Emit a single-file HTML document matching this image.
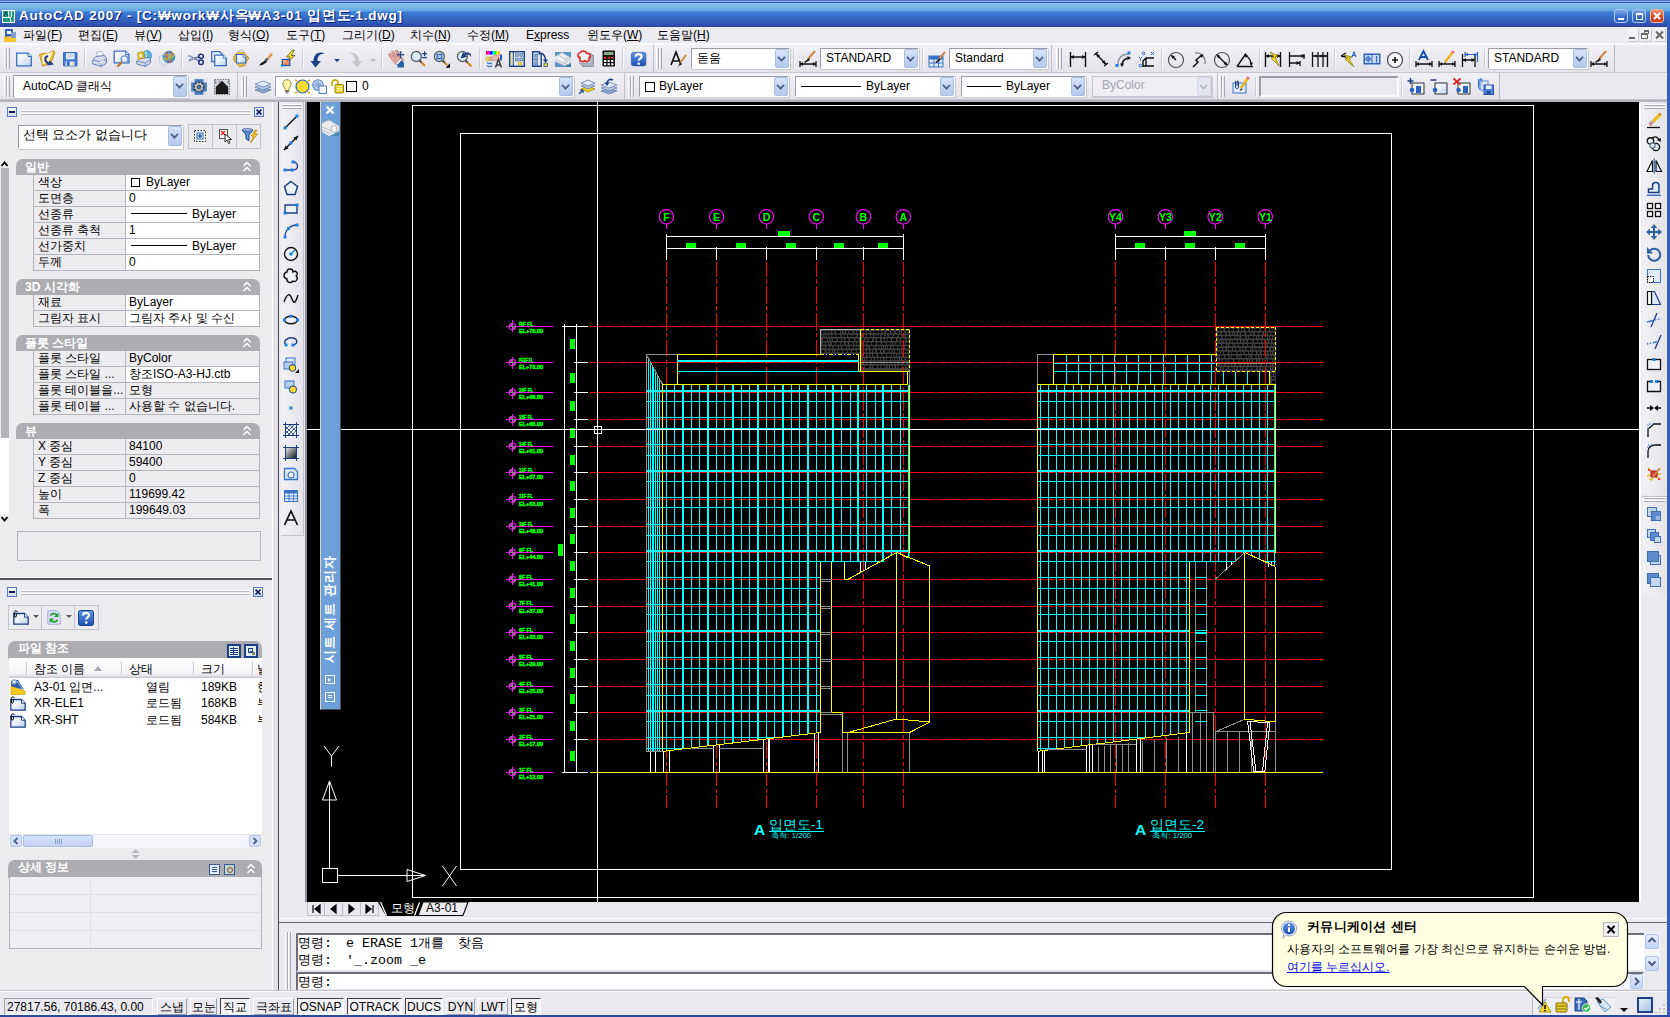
<!DOCTYPE html>
<html lang="ko"><head><meta charset="utf-8"><title>AutoCAD 2007 - [C:\work\사옥\A3-01 입면도-1.dwg]</title>
<style>
html,body{margin:0;padding:0}
body{width:1670px;height:1017px;overflow:hidden;position:relative;background:#eae9ef;font-family:"Liberation Sans",sans-serif;font-size:12px;color:#000}
.a{position:absolute;white-space:nowrap;overflow:hidden}
.t{position:absolute;white-space:nowrap;line-height:14px;height:14px;overflow:hidden}
.ic{position:absolute;overflow:visible}
#titlebar{left:0;top:0;width:1670px;height:27px;background:linear-gradient(#4f6fc4 0,#4f6fc4 1px,#8fb8e8 1px,#8fb8e8 2px,#2f57b5 2px,#2f57b5 3px,#8ac6f0 3px,#7ab8ea 7px,#62a3e2 11px,#3c7ed3 12px,#3870c9 16px,#3563bf 20px,#3055b2 24px,#2b49a3 26px,#2947a0 27px)}
#title{left:19px;top:7px;width:430px;height:18px;line-height:18px;color:#fff;font-weight:bold;font-size:13.500px;letter-spacing:.8px;text-shadow:1px 1px 0 #0a1f7a}
.wb{position:absolute;top:9px;width:14px;height:14px;border-radius:3px;border:1px solid #a9c6ee;box-sizing:border-box;background:linear-gradient(#7fa8e4,#3f74d0 50%,#2f5fc0)}
#menubar{left:0;top:27px;width:1667px;height:16px;background:#ecebf0}
.mi{top:27.500px}
.grip{position:absolute;width:3px;border-left:1px solid #fff;border-right:1px solid #a9a8b3;box-sizing:border-box;background:#e6e5ec}
.sep{position:absolute;width:1px;background:#cfced7;border-right:1px solid #f8f8fb}
.tbrow{position:absolute;background:linear-gradient(#f1f0f5,#ebeaf0 50%,#e3e2e9)}
.cb{position:absolute;height:21px;box-sizing:border-box;border:1px solid;border-color:#9c9ba6 #fdfdfe #fdfdfe #9c9ba6;background:#fff;box-shadow:1px 1px 0 #c8c7d1}
.cb .tx{position:absolute;left:5px;top:2px;line-height:15px;height:15px;white-space:nowrap;overflow:hidden}
.cb .dd{position:absolute;right:0;top:0;bottom:0;width:14px;border-radius:2px;background:linear-gradient(#d8e4f8,#c4d5f2 50%,#b5c9ec);border:1px solid #a9bee4;box-sizing:border-box}
.cb .dd:after{content:"";position:absolute;left:2px;top:4px;width:5px;height:5px;border-right:2px solid #4d6185;border-bottom:2px solid #4d6185;transform:rotate(45deg) scale(.85);transform-origin:50% 50%}
.cb.dis{background:#efeef3;border-color:#c9c8d2}
.cb.dis .tx{color:#a7a6b0}
.cb.dis .dd{background:#e3e6f0;border-color:#d3d6e2}
.cb.dis .dd:after{border-color:#b9bccb}
/* palettes */
.phead{position:absolute;left:16px;width:244px;height:16px;background:#adadb1;border-radius:7px 7px 0 0;color:#fff;font-weight:bold;line-height:16px}
.phead .tx{position:absolute;left:9px;top:0;white-space:nowrap}
.prow{position:absolute;left:33px;width:227px;height:16px;box-sizing:border-box;border:1px solid #b5b4bd;border-top:none;background:#ecebee}
.prow .k{position:absolute;left:4px;top:0;line-height:15px;white-space:nowrap;width:86px;overflow:hidden}
.prow .v{position:absolute;left:91px;top:0;right:0;bottom:0;border-left:1px solid #b5b4bd;line-height:15px;padding-left:3px;white-space:nowrap;overflow:hidden}
.prow .v.w{background:#fff}
.chev{position:absolute;right:8px;top:2px;width:10px;height:11px}
.sb{position:absolute;height:17px;line-height:17px;box-sizing:border-box;text-align:center;white-space:nowrap;overflow:hidden;top:998px}
.sb.on{border:1px solid;border-color:#3e3d48 #fff #fff #3e3d48;background:#f3f3f6}
.sb.off{border:1px solid;border-color:#fff #9d9ca8 #9d9ca8 #fff}
.cm{font-family:"Liberation Mono",monospace;font-size:13.330px;height:18px;line-height:18px}

.h{display:inline-block;white-space:nowrap;overflow:visible;vertical-align:baseline}

</style></head>
<body>
<svg width="0" height="0" style="position:absolute"><defs>
<linearGradient id="gPaper" x1="0" y1="0" x2="1" y2="1"><stop offset="0" stop-color="#ffffff"/><stop offset=".5" stop-color="#e6eef8"/><stop offset="1" stop-color="#b9d0e8"/></linearGradient>
<linearGradient id="gHelp" x1="0" y1="0" x2="0" y2="1"><stop offset="0" stop-color="#5f94e6"/><stop offset="1" stop-color="#1d4fb0"/></linearGradient>
<linearGradient id="gGrad" x1="0" y1="0" x2="1" y2="1"><stop offset="0" stop-color="#e8eef8"/><stop offset="1" stop-color="#101010"/></linearGradient>
</defs></svg>
<div id="titlebar" class="a"></div>
<svg class="ic" style="left:2px;top:10px" width="13" height="13" viewBox="0 0 13 13"><rect width="13" height="13" fill="#fff"/><rect x="1" y="1" width="5" height="6" fill="#1f9a88"/><rect x="7" y="1" width="2" height="6" fill="#2bb5a0"/><rect x="10" y="1" width="2" height="6" fill="#1f9a88"/><rect x="1" y="8" width="7" height="4" fill="#1f9a88"/><rect x="9" y="7" width="3" height="5" fill="#2bb5a0"/><path d="M2 6l2-4 2 4M9 8l2 2" stroke="#0c3c36" stroke-width="1" fill="none"/></svg>
<div id="title" class="a">AutoCAD 2007 - [C:₩work₩<span class="h" style="width:28.6px">사옥</span>₩A3-01 <span class="h" style="width:42.9px">입면도</span>-1.dwg]</div>
<div class="wb" style="left:1614px"><i style="position:absolute;left:3px;top:8px;width:6px;height:2px;background:#fff"></i></div>
<div class="wb" style="left:1632px"><i style="position:absolute;left:3px;top:3px;width:5px;height:4px;border:1px solid #fff;border-top-width:2px"></i></div>
<div class="wb" style="left:1650px;background:linear-gradient(#e89a7c,#d4512c 50%,#c5401c);border-color:#f0b8a0"><svg width="12" height="12" viewBox="0 0 12 12" style="position:absolute;left:0;top:0"><path d="M3 3l6 6M9 3l-6 6" stroke="#fff" stroke-width="2"/></svg></div>
<div class="a" style="left:1667px;top:20px;width:3px;height:997px;background:#3560c0"></div>
<div class="a" style="left:0;top:1015px;width:1670px;height:2px;background:#2a4aa4"></div>
<div id="menubar" class="a"></div>
<div class="a" style="left:0;top:43px;width:1667px;height:2px;background:#fbfbfd"></div>
<svg class="ic" style="left:3px;top:28px" width="14" height="15" viewBox="0 0 14 15"><rect x="2" y="1" width="8" height="9" fill="#2f62b8"/><rect x="4" y="3" width="4" height="3" fill="#fff"/><path d="M1 9l8-1 4 2v4h-12z" fill="#f4c430"/><rect x="8" y="4" width="5" height="6" fill="#7f9fd4"/></svg>
<div class="t mi" style="left:23px;width:44px"><span class="h" style="width:24px">파일</span>(<u>F</u>)</div>
<div class="t mi" style="left:78px;width:44px"><span class="h" style="width:24px">편집</span>(<u>E</u>)</div>
<div class="t mi" style="left:134px;width:32px"><span class="h" style="width:12px">뷰</span>(<u>V</u>)</div>
<div class="t mi" style="left:178px;width:39px"><span class="h" style="width:24px">삽입</span>(<u>I</u>)</div>
<div class="t mi" style="left:228px;width:46px"><span class="h" style="width:24px">형식</span>(<u>O</u>)</div>
<div class="t mi" style="left:286px;width:44px"><span class="h" style="width:24px">도구</span>(<u>T</u>)</div>
<div class="t mi" style="left:342px;width:56px"><span class="h" style="width:36px">그리기</span>(<u>D</u>)</div>
<div class="t mi" style="left:410px;width:45px"><span class="h" style="width:24px">치수</span>(<u>N</u>)</div>
<div class="t mi" style="left:467px;width:47px"><span class="h" style="width:24px">수정</span>(<u>M</u>)</div>
<div class="t mi" style="left:526px;width:50px">E<u>x</u>press</div>
<div class="t mi" style="left:587px;width:58px"><span class="h" style="width:36px">윈도우</span>(<u>W</u>)</div>
<div class="t mi" style="left:657px;width:56px"><span class="h" style="width:36px">도움말</span>(<u>H</u>)</div>
<div class="a" style="left:1627px;top:28px;width:11px;height:13px;background:#f2f1f5;box-shadow:1px 1px 0 #c9c8d0"><i style="position:absolute;left:2px;top:9px;width:6px;height:2px;background:#6a6a62"></i></div>
<div class="a" style="left:1640px;top:28px;width:11px;height:13px;background:#f2f1f5;box-shadow:1px 1px 0 #c9c8d0"><i style="position:absolute;left:4px;top:2px;width:5px;height:4px;border:1px solid #6a6a62;border-top-width:2px;box-sizing:border-box"></i><i style="position:absolute;left:1px;top:5px;width:7px;height:6px;border:1px solid #6a6a62;border-top-width:2px;box-sizing:border-box;background:#f2f1f5"></i></div>
<div class="a" style="left:1654px;top:28px;width:11px;height:13px;background:#f2f1f5;box-shadow:1px 1px 0 #c9c8d0"><svg width="11" height="13" style="position:absolute;left:0;top:0"><path d="M2 3.500l7 7M9 3.500l-7 7" stroke="#6a6a62" stroke-width="2"/></svg></div>
<div class="tbrow" style="left:0;top:45px;width:1615px;height:27px"></div>
<div class="a" style="left:0;top:72px;width:1667px;height:1px;background:#c9c8d2"></div>
<div class="grip" style="left:4px;top:48px;height:21px"></div><div class="grip" style="left:7px;top:48px;height:21px"></div>
<svg class="ic" style="left:16px;top:52px" width="16" height="16" viewBox="0 0 16 16"><path d="M.7 1.200h11.300l3.300 3.300v9.300h-14.600z" fill="url(#gPaper)" stroke="#3a6cc4" stroke-width="1.300"/><path d="M12 1.200v3.300h3.300" fill="#fff" stroke="#3a6cc4" stroke-width="1"/></svg>
<svg class="ic" style="left:39px;top:50px" width="17" height="17" viewBox="0 0 17 17"><path d="M.5 4.500l5.500-1.500 2 1 6.500-3.500 1.500 2-4 11-8.500 2.500z" fill="#e6b53a" stroke="#b98a1e" stroke-width=".8"/><path d="M3 5.500l11-4-4 10.500-6.500 2.500z" fill="#f8e59e"/><path d="M3 5.500l10-3-3.500 9-5.500 2z" fill="#fdf6d8" opacity=".7"/><path d="M9 6c-3.500 1-4 5 .5 7.500" fill="none" stroke="#1d3f85" stroke-width="2"/><path d="M8 15.500l7-1-4.500-4z" fill="#1d3f85"/></svg>
<svg class="ic" style="left:63px;top:52px" width="15" height="15" viewBox="0 0 15 15"><path d="M.6.600h13.300v13.300h-13.300z" fill="#4478d8" stroke="#2f5fc0" stroke-width="1"/><rect x="3" y="1.200" width="8.500" height="6" fill="#eef3fb"/><path d="M4.500 3h5.500M4.500 5h5.500" stroke="#9db4dc" stroke-width=".9"/><rect x="2.500" y="9.500" width="9" height="4.400" fill="#dfe7f5"/><rect x="4" y="9.500" width="2.500" height="4.400" fill="#2f5fc0"/><rect x="9" y="10" width="2" height="3" fill="#e8dc98"/></svg>
<svg class="ic" style="left:92px;top:51px" width="15" height="16" viewBox="0 0 15 16"><path d="M4.500 1.200l5-1 3 5-6.500 2z" fill="#fbfbfe" stroke="#8b9cc8" stroke-width=".8"/><path d="M.8 9l3-3.500 8.500-1 2.200 3v4.500l-5 3.500-8.700-2.500z" fill="#d5dcf0" stroke="#5c74b4" stroke-width=".9"/><path d="M.8 9l8.500 2 5.200-3.500M9.300 11v4" fill="none" stroke="#5c74b4" stroke-width=".8"/><path d="M6 11.500l5.500-2.500 2 1-5 3z" fill="#fff" stroke="#8b9cc8" stroke-width=".6"/></svg>
<svg class="ic" style="left:113px;top:50px" width="17" height="17" viewBox="0 0 17 17"><path d="M1.200 1.200h11.500l3.300 3.300v8.300h-14.800z" fill="url(#gPaper)" stroke="#3a6cc4" stroke-width="1.300"/><path d="M12.700 1.200v3.300h3.300" fill="#fff" stroke="#3a6cc4"/><path d="M9.500 11.500l-5 5" stroke="#b8722e" stroke-width="2.200"/><circle cx="11.600" cy="9.300" r="3.400" fill="#d8e8f8" stroke="#6f8fc8" stroke-width="1.300"/><circle cx="10.800" cy="8.500" r="1.200" fill="#fff" opacity=".8"/></svg>
<svg class="ic" style="left:136px;top:50px" width="16" height="17" viewBox="0 0 16 17"><ellipse cx="11" cy="5.500" rx="4.500" ry="5" fill="#58b0e0" stroke="#2c7ab8" stroke-width=".6"/><path d="M9 1.500c2 2 2 6 0 8" stroke="#bfe6a0" stroke-width="1.500" fill="none"/><path d="M.8 11l3-2.500 8.500-1 2.200 2v3.500l-5 3.500-8.700-2.500z" fill="#d5dcf0" stroke="#5c74b4" stroke-width=".9"/><path d="M.8 11l8.500 2 5.200-3M9.300 13v3.500" fill="none" stroke="#5c74b4" stroke-width=".8"/><path d="M1.500 3l5.500-1.500 1.500 6-6 2z" fill="#f0c020" stroke="#b08a10" stroke-width=".7"/><path d="M3.500 4.500l2.500 2.500M6 4l-2 3.500" stroke="#fff" stroke-width="1.100"/></svg>
<svg class="ic" style="left:159px;top:50px" width="16" height="17" viewBox="0 0 16 17"><path d="M.5 6l5.500-1.500 0 7 5 0-5.500 4.500-5-3.500z" fill="#dde5f2" stroke="#b5c0d8" stroke-width=".6"/><circle cx="10" cy="7" r="5.800" fill="#3f9ad8" stroke="#2a6eb0" stroke-width=".7"/><path d="M5 4.500c3.500 1 7.500 0 9.500-1.500M4.500 9c4-1 8-3 11-4" fill="none" stroke="#e8c030" stroke-width="1.200"/><path d="M8.500 1.500c-1.500 4-1 8 1.500 11M12 1.800c1.500 3 1.500 7-1 10.500" fill="none" stroke="#e04838" stroke-width="1.200"/><path d="M5.500 10c3 0 7-2 9.500-4" fill="none" stroke="#8ed050" stroke-width="1.100"/></svg>
<svg class="ic" style="left:188px;top:51px" width="16" height="16" viewBox="0 0 16 16"><path d="M.5 4.500l11 5.500M.8 9.500l10-3.800" stroke="#6f7fa8" stroke-width="1.500"/><path d="M.5 4.500l6 3.500" stroke="#c8d0e0" stroke-width=".7"/><ellipse cx="13" cy="5.300" rx="2.300" ry="2" fill="none" stroke="#1d2f75" stroke-width="1.500"/><ellipse cx="13" cy="11.200" rx="2.300" ry="2.300" fill="none" stroke="#1d2f75" stroke-width="1.500"/></svg>
<svg class="ic" style="left:211px;top:51px" width="16" height="16" viewBox="0 0 16 16"><path d="M.7.700h8l2.800 2.800v7h-10.800z" fill="url(#gPaper)" stroke="#3a6cc4" stroke-width="1.300"/><path d="M3.700 4.200h8.500l3.100 3.100v7.300h-11.600z" fill="url(#gPaper)" stroke="#3a6cc4" stroke-width="1.300"/><path d="M12.200 4.200v3.100h3.100" fill="#fff" stroke="#3a6cc4" stroke-width=".9"/></svg>
<svg class="ic" style="left:233px;top:50px" width="17" height="17" viewBox="0 0 17 17"><path d="M.8 6l5.500-5 3.500 0 6 7-4.500 8-5 .5-5.500-6z" fill="#e6bd50" stroke="#b08a20" stroke-width=".8"/><path d="M5 2l2-2 2.500 0 1.500 2z" fill="#f6f6fa" stroke="#a0a4b0" stroke-width=".6"/><path d="M3.500 4.500h6.500l2.800 2.800v5.700h-9.300z" fill="url(#gPaper)" stroke="#3a6cc4" stroke-width="1.200"/><path d="M10 4.500v2.800h2.800" fill="#fff" stroke="#3a6cc4" stroke-width=".8"/></svg>
<svg class="ic" style="left:257px;top:51px" width="17" height="16" viewBox="0 0 17 16"><path d="M15 2.500l-5.500 7" stroke="#d8955a" stroke-width="2.600"/><path d="M14.200 1.800l-5 6.500" stroke="#f0c8a0" stroke-width=".8"/><path d="M10.500 7.500l-2.500 3" stroke="#4a6a78" stroke-width="2.400"/><path d="M8.500 9.500l1.500 1.500-4.500 3-3.500.5 2-2.500z" fill="#1a1a1a"/></svg>
<svg class="ic" style="left:280px;top:50px" width="17" height="17" viewBox="0 0 17 17"><path d="M12.500 0l-6 7h3.500l-4 6 9-7.500h-3.800l3.300-5.500z" fill="#f6e020" stroke="#4a4020" stroke-width=".7"/><rect x="2.300" y="9.500" width="7.500" height="6" fill="#f08858" stroke="#1d4fb0" stroke-width="1.200"/><rect x="3" y="10.200" width="3" height="2" fill="#f8b898"/><rect x="1" y="14" width="2.600" height="2.600" fill="#1f7fe6"/></svg>
<div class="sep" style="left:84px;top:49px;height:20px"></div>
<div class="sep" style="left:181px;top:49px;height:20px"></div>
<div class="sep" style="left:302px;top:49px;height:20px"></div>
<div class="sep" style="left:381px;top:49px;height:20px"></div>
<div class="sep" style="left:479px;top:49px;height:20px"></div>
<div class="sep" style="left:622px;top:49px;height:20px"></div>
<svg class="ic" style="left:310px;top:51px" width="17" height="17" viewBox="0 0 17 17"><path d="M15.800 3.200c-5.500-4-12.500-1-12.300 6.800h-3l5 6.500 5.500-6.500h-3.500c-.3-5 3.500-8.500 8.300-6.800z" fill="#1d3f85"/></svg>
<div class="a" style="left:334px;top:59px;width:0;height:0;border:3px solid transparent;border-top:3px solid #1d3f85;border-bottom:none"></div>
<svg class="ic" style="left:346px;top:51px" width="17" height="17" viewBox="0 0 17 17"><path d="M.8 3.200c5.500-4 12.500-1 12.300 6.800h3l-5 6.500-5.500-6.500h3.500c.3-5-3.500-8.500-8.300-6.800z" fill="#c6c8ce"/><path d="M1.500 3c5-3 10.500-1 11 4" fill="none" stroke="#eceef2" stroke-width=".8"/></svg>
<div class="a" style="left:370px;top:59px;width:0;height:0;border:3px solid transparent;border-top:3px solid #b9bac4;border-bottom:none"></div>
<svg class="ic" style="left:388px;top:51px" width="17" height="17" viewBox="0 0 17 17"><path d="M.5 3.500l1.500-1.500 4.500 4-3-5.500 1.800-.5 4 5.500-1.800-6 2-.2 3 6.500 3.500 3-5 5.500-4-1.500-3.500-4.500z" fill="#dba79c" stroke="#b07868" stroke-width=".7"/><path d="M9.500 13.500l4-4.500 2.500 2.500v5h-6.500z" fill="#2f5f9f"/><path d="M8.500 12.500l4-4.500 1 1-4 4.500z" fill="#f4f6fa"/><path d="M12.600 0l1.500 1.800h-1v1.500h1.500v-1l1.800 1.500-1.800 1.500v-1h-1.500v1.500h1l-1.500 1.800-1.500-1.800h1v-1.500h-1.500v1l-1.800-1.500 1.800-1.500v1h1.500v-1.500h-1z" fill="#1d3f85"/></svg>
<svg class="ic" style="left:410px;top:50.5px" width="18" height="17" viewBox="0 0 18 17"><path d="M9.500 9.500l5.500 5.500" stroke="#d0882e" stroke-width="2.300"/><path d="M9.500 9.500l2 2" stroke="#5a5f68" stroke-width="2.300"/><circle cx="6.300" cy="5.500" r="5" fill="#dce9f8" stroke="#5a5f68" stroke-width="1.300"/><path d="M3.300 3.500a3.200 3.200 0 0 1 3-1.500" fill="none" stroke="#fff" stroke-width="1.200"/><path d="M14.600 0.200v5M12.100 2.700h5M12.100 6.700h5" stroke="#1d3f85" stroke-width="1.300"/></svg>
<svg class="ic" style="left:433px;top:50.5px" width="18" height="17" viewBox="0 0 18 17"><path d="M9.500 9.500l4.500 4.500" stroke="#d0882e" stroke-width="2.300"/><path d="M9.500 9.500l2 2" stroke="#5a5f68" stroke-width="2.300"/><circle cx="6.400" cy="5.500" r="5" fill="#dce9f8" stroke="#5a5f68" stroke-width="1.300"/><path d="M3.400 3.500a3.200 3.200 0 0 1 3-1.500" fill="none" stroke="#fff" stroke-width="1.200"/><rect x="4" y="3.200" width="4.800" height="4.600" fill="#a8c0e0" stroke="#2f5f9f" stroke-width="1.200"/><path d="M17 12.300v4.500h-4.500z" fill="#000"/></svg>
<svg class="ic" style="left:456px;top:50.5px" width="18" height="17" viewBox="0 0 18 17"><path d="M9.500 9.500l6 6" stroke="#d0882e" stroke-width="2.300"/><path d="M9.500 9.500l2 2" stroke="#5a5f68" stroke-width="2.300"/><circle cx="6.400" cy="5.500" r="5" fill="#dce9f8" stroke="#5a5f68" stroke-width="1.300"/><path d="M3.400 3.500a3.200 3.200 0 0 1 3-1.500" fill="none" stroke="#fff" stroke-width="1.200"/><path d="M15 6c1-4-3-5.500-6.500-3.500l-1.500-1.500-2.500 6.500 6.500-1.800-1.500-1.500c2.500-1.200 4.500-.5 5.500 1.800z" fill="#1d3f85"/></svg>
<svg class="ic" style="left:486px;top:51px" width="17" height="17" viewBox="0 0 17 17"><defs><linearGradient id="gRb" x1="0" x2="1"><stop offset="0" stop-color="#f00"/><stop offset=".2" stop-color="#f0f"/><stop offset=".4" stop-color="#00f"/><stop offset=".55" stop-color="#0ff"/><stop offset=".7" stop-color="#0f0"/><stop offset=".85" stop-color="#ff0"/><stop offset="1" stop-color="#f80"/></linearGradient></defs><rect x="0" y="0" width="13.500" height="3.600" fill="url(#gRb)"/><rect x="0" y="6" width="6.500" height="3.600" fill="#e8dc60" stroke="#b8a830" stroke-width=".6"/><path d="M2.500 8l6-4 6 0 0 4.500-5 1.500z" fill="#e8b8a8" stroke="#b88070" stroke-width=".6"/><rect x="14" y="3.500" width="2" height="6" fill="#2f5fc0"/><path d="M1 11.500c2 1.500 3.500 1.500 5 0M1 14.500c2 1.500 3.500 1.500 5 0" fill="none" stroke="#3a78c8" stroke-width="1.300"/><path d="M9.500 16.500l3-8 3 8M10.600 14h3.800" fill="none" stroke="#3a3e48" stroke-width="1.500"/></svg>
<svg class="ic" style="left:509px;top:51px" width="16" height="16" viewBox="0 0 16 16"><rect x=".7" y=".7" width="14.600" height="14.600" fill="#e4ecf8" stroke="#1d3f85" stroke-width="1.400"/><path d="M4.300 .7v14.600" stroke="#1d3f85" stroke-width="1"/><g fill="#e8d020"><rect x="1.800" y="2.500" width="1.500" height="1.500"/><rect x="1.800" y="5.500" width="1.500" height="1.500"/><rect x="1.800" y="8.500" width="1.500" height="1.500"/><rect x="1.800" y="11.500" width="1.500" height="1.500"/></g><g fill="#7f9fd0" stroke="#4f6fa8" stroke-width=".5"><rect x="6.300" y="2.500" width="3" height="3"/><rect x="10.800" y="2.500" width="3" height="3"/><rect x="6.300" y="7" width="3" height="3"/><rect x="10.800" y="7" width="3" height="3"/></g><g fill="#f0e860"><rect x="7.300" y="3.500" width="1" height="1"/><rect x="11.800" y="3.500" width="1" height="1"/><rect x="7.300" y="8" width="1" height="1"/><rect x="11.800" y="8" width="1" height="1"/></g><rect x="9.500" y="11" width="3" height="3" fill="#f0e040" stroke="#a89820" stroke-width=".5"/></svg>
<svg class="ic" style="left:532px;top:51px" width="17" height="16" viewBox="0 0 17 16"><path d="M.7 .7h6.500l2 2v12.600h-8.500z" fill="#e4ecf8" stroke="#1d3f85" stroke-width="1.400"/><g fill="#7f9fd0" stroke="#4f6fa8" stroke-width=".5"><rect x="2.800" y="3" width="3" height="3"/><rect x="2.800" y="7" width="3" height="3"/><rect x="2.800" y="11" width="3" height="3"/></g><path d="M6.500 3c4-1.500 7 1 7 6" fill="none" stroke="#1d3f85" stroke-width="1.600"/><path d="M10.800 8.500h5.400l-2.700 3.200z" fill="#1d3f85"/><rect x="12" y="12" width="3.500" height="3.500" fill="#f0e040" stroke="#1d3f85" stroke-width=".7"/></svg>
<svg class="ic" style="left:555px;top:52px" width="16" height="15" viewBox="0 0 16 15"><rect x="0" y="0" width="16" height="15" fill="#5595c8"/><path d="M0 4.500l7-4 9 5.500v5l-5 3.500-11-5z" fill="#eceef2"/><path d="M0 4.500l7-4 9 5.500M0 7.500l10 4.500M0 9.500l11 5M3 3l9 5" fill="none" stroke="#b0b5c0" stroke-width=".8"/><ellipse cx="12.500" cy="9.500" rx="2.600" ry="3.200" fill="#f8f8fa" stroke="#a0a5b2" stroke-width=".8"/><ellipse cx="12.500" cy="9.500" rx="1" ry="1.400" fill="#c0c4ce"/><path d="M8 15l8-4v4z" fill="#3f7fa8"/></svg>
<svg class="ic" style="left:577px;top:50px" width="17" height="17" viewBox="0 0 17 17"><path d="M5.500 5.500h11v11h-11z" fill="#c8ccd6" stroke="#7a808e" stroke-width=".8"/><path d="M4 4h11v11h-11z" fill="#dde0e8" stroke="#7a808e" stroke-width=".8"/><path d="M2.500 3.500h11v10h-11z" fill="#c8daf0" stroke="#8a90a0" stroke-width=".7"/><path d="M3.500 2.500c-3 .5-3.500 4.500-.5 5-1.500 3 2.500 5.500 4.500 3.200 2 2 5.500.5 4.500-2.700 2.500-1.500 1-5.500-2-4.500-.8-3-5.500-3-6.500-1z" fill="#eef4fc" stroke="#e82828" stroke-width="1.700"/></svg>
<svg class="ic" style="left:602px;top:50px" width="14" height="17" viewBox="0 0 14 17"><rect x=".5" y=".5" width="12.500" height="16" rx="1" fill="#111"/><rect x="2" y="2" width="9.500" height="3" fill="#8aa88a"/><g fill="#e83030"><rect x="2" y="6.800" width="2.200" height="2"/><rect x="5.600" y="6.800" width="2.200" height="2"/><rect x="9.200" y="6.800" width="2.200" height="2"/></g><g fill="#fff"><rect x="2" y="10" width="2.200" height="2"/><rect x="5.600" y="10" width="2.200" height="2"/><rect x="9.200" y="10" width="2.200" height="2"/><rect x="2" y="13.200" width="2.200" height="2"/><rect x="5.600" y="13.200" width="2.200" height="2"/><rect x="9.200" y="13.200" width="2.200" height="2"/></g></svg>
<svg class="ic" style="left:631px;top:52px" width="15" height="14" viewBox="0 0 15 14"><rect x=".3" y=".3" width="14.600" height="13.600" rx="2.500" fill="url(#gHelp)" stroke="#2a52a8" stroke-width=".6"/><path d="M4.600 4.800c0-3.500 6-3.500 6-.2 0 2-2.900 2.100-2.900 4.200" fill="none" stroke="#fff" stroke-width="2.200"/><circle cx="7.700" cy="11.700" r="1.300" fill="#fff"/></svg>
<div class="a" style="left:653px;top:45px;width:1px;height:27px;background:#c2c1cb"></div>
<div class="grip" style="left:656px;top:48px;height:21px"></div><div class="grip" style="left:659px;top:48px;height:21px"></div>
<svg class="ic" style="left:670px;top:51px" width="18" height="17" viewBox="0 0 18 17"><path d="M1 14l5-13 5 13M3 10h6" fill="none" stroke="#111" stroke-width="1.700"/><path d="M16 4l-6 8" stroke="#c98a4a" stroke-width="2"/><path d="M10.500 11l-3 5 4-3z" fill="#222"/></svg>
<div class="cb " style="left:691px;top:48px;width:99px;height:21px"><span class="tx">돋움</span><span class="dd"></span></div>
<div class="sep" style="left:793px;top:49px;height:20px"></div>
<svg class="ic" style="left:799px;top:50px" width="18" height="18" viewBox="0 0 18 18"><path d="M1 11v6M17 11v6M1 14h16" stroke="#111" stroke-width="1.300"/><path d="M1 14l3-2v4zM17 14l-3-2v4z" fill="#111"/><path d="M16 1l-7 8" stroke="#c98a4a" stroke-width="2.200"/><path d="M10 8l-5 4 1 1 5-3z" fill="#222"/></svg>
<div class="cb " style="left:820px;top:48px;width:99px;height:21px"><span class="tx">STANDARD</span><span class="dd"></span></div>
<div class="sep" style="left:922px;top:49px;height:20px"></div>
<svg class="ic" style="left:928px;top:51px" width="18" height="17" viewBox="0 0 18 17"><rect x="1" y="5" width="14" height="11" fill="#dfe9f7" stroke="#3b74c9"/><rect x="1" y="5" width="14" height="3.500" fill="#3b74c9"/><path d="M1 12h14M6 8v8M10.500 8v8" stroke="#3b74c9"/><path d="M17 1l-6 7" stroke="#c98a4a" stroke-width="2.200"/><path d="M11.500 7l-4 4 1 1 4-3z" fill="#222"/></svg>
<div class="cb " style="left:949px;top:48px;width:99px;height:21px"><span class="tx">Standard</span><span class="dd"></span></div>
<div class="a" style="left:1051px;top:45px;width:1px;height:27px;background:#c2c1cb"></div>
<div class="grip" style="left:1056px;top:48px;height:21px"></div><div class="grip" style="left:1059px;top:48px;height:21px"></div>
<svg class="ic" style="left:1069px;top:51px" width="18" height="17" viewBox="0 0 18 17"><path d="M1.500 1v15M16.500 1v15M1.500 6h15" stroke="#111" stroke-width="1.400" fill="none"/><path d="M1.500 6l3.500-2v4zM16.500 6l-3.500-2v4z" fill="#111"/></svg>
<svg class="ic" style="left:1092px;top:51px" width="18" height="17" viewBox="0 0 18 17"><path d="M2 4l4-3M12 15l4-3M4 2.500l10 11" stroke="#111" stroke-width="1.400" fill="none"/><path d="M4 2.500l4 2-2.500 2.200zM14 13.500l-4-2 2.500-2.200z" fill="#111"/></svg>
<svg class="ic" style="left:1115px;top:51px" width="18" height="17" viewBox="0 0 18 17"><path d="M3 14c0-7 4-11 11-11" fill="none" stroke="#8a8f9e" stroke-width="1.300"/><path d="M7 15c0-5 3-8 8-8" fill="none" stroke="#111" stroke-width="1.600"/><path d="M7 16l-2-3.500h4zM16 7l-3.500-2v4z" fill="#111"/><rect x="12.500" y="0.500" width="3" height="3" fill="#2a7fe0"/><rect x="0.500" y="13" width="3" height="3" fill="#2a7fe0"/></svg>
<svg class="ic" style="left:1138px;top:51px" width="18" height="17" viewBox="0 0 18 17"><path d="M5 16v-6l3-3 3-0M5 15h11M8 7h8M8 7v9" fill="none" stroke="#111" stroke-width="1.400"/><g fill="none" stroke="#2a63c0" stroke-width="1"><circle cx="5.500" cy="2.500" r="1.300"/><circle cx="2.500" cy="14.500" r="1.300"/><path d="M13 1l3 3m0-3l-3 3M1 6l1.500 1.500 1.500-1.500M2.500 7.500v2"/></g></svg>
<svg class="ic" style="left:1167px;top:51px" width="18" height="18" viewBox="0 0 18 18"><circle cx="9" cy="9" r="7.500" fill="none" stroke="#555" stroke-width="1.200"/><path d="M9 9l-4.500-4.500" stroke="#111" stroke-width="1.400"/><path d="M4 4l4 1.500-2.500 2.500z" fill="#111"/></svg>
<svg class="ic" style="left:1190px;top:51px" width="18" height="18" viewBox="0 0 18 18"><path d="M5 2c6-1 11 4 10 11" fill="none" stroke="#777" stroke-width="1.200"/><path d="M3 16l5-5-2-2 6-5" fill="none" stroke="#111" stroke-width="1.500"/><path d="M13.500 3l-4 1.200 2.500 2.800z" fill="#111"/></svg>
<svg class="ic" style="left:1213px;top:51px" width="18" height="18" viewBox="0 0 18 18"><circle cx="9" cy="9" r="7.500" fill="none" stroke="#555" stroke-width="1.200"/><path d="M4 4l10 10" stroke="#111" stroke-width="1.400"/><path d="M3.500 3.500l4 1.500-2.500 2.500zM14.500 14.500l-4-1.500 2.500-2.500z" fill="#111"/></svg>
<svg class="ic" style="left:1236px;top:51px" width="18" height="17" viewBox="0 0 18 17"><path d="M1 15.500h16M1 15.500l9-13" fill="none" stroke="#111" stroke-width="1.400"/><path d="M9 4c4 2 6 6 6 10" fill="none" stroke="#111" stroke-width="1.200"/><path d="M8 3.500l4 .5-2 3zM15.500 15l-2-3.500 3.500 0z" fill="#111"/></svg>
<svg class="ic" style="left:1264px;top:51px" width="18" height="17" viewBox="0 0 18 17"><path d="M1.500 1v15M16.500 1v15M1.500 5h15" stroke="#111" stroke-width="1.400" fill="none"/><path d="M1.500 5l3.500-2v4zM16.500 5l-3.500-2v4z" fill="#111"/><path d="M6 1l8 4-3 1 4 9-8-8 3-1z" fill="#f2d21c" stroke="#8a7a10" stroke-width=".8"/></svg>
<svg class="ic" style="left:1288px;top:51px" width="18" height="17" viewBox="0 0 18 17"><path d="M1.500 1v15M16 3v5M12 10v5M1.500 5h15M1.500 12h10.500" stroke="#111" stroke-width="1.300" fill="none"/><path d="M17 5l-3.500-2v4zM12 12l-3.500-2v4z" fill="#111"/></svg>
<svg class="ic" style="left:1311px;top:51px" width="18" height="17" viewBox="0 0 18 17"><path d="M1.500 1v15M7 1v15M12 1v15M16.500 1v15M1.500 5h15" stroke="#111" stroke-width="1.300" fill="none"/><path d="M7 5l-2.500-1.500v3zM12 5l-2.500-1.500v3zM12 5l2.500-1.500v3z" fill="#111"/></svg>
<svg class="ic" style="left:1340px;top:51px" width="18" height="17" viewBox="0 0 18 17"><path d="M1 5l5-3M1 5l5 1" stroke="#111" stroke-width="1.300"/><path d="M4 4l8 2-3 2 5 8-9-8 3-1z" fill="#f2d21c" stroke="#8a7a10" stroke-width=".8"/><path d="M12 6l2-5 2 5M12.700 4.500h2.600" fill="none" stroke="#2a63c0" stroke-width="1.100"/></svg>
<svg class="ic" style="left:1363px;top:51px" width="18" height="16" viewBox="0 0 18 16"><rect x="0.500" y="2.500" width="17" height="11" fill="#2a63c0"/><rect x="2" y="4" width="6.500" height="8" fill="#cfe0f3"/><rect x="9.500" y="4" width="6.500" height="8" fill="#cfe0f3"/><circle cx="5.200" cy="8" r="2.200" fill="none" stroke="#2a63c0"/><path d="M5.200 4.500v7M2.500 8h5.500" stroke="#2a63c0" stroke-width=".9"/><path d="M11 11.500h.1M13.500 5v6.500" stroke="#2a63c0" stroke-width="1.300"/></svg>
<svg class="ic" style="left:1386px;top:51px" width="18" height="18" viewBox="0 0 18 18"><circle cx="9" cy="9" r="7.500" fill="#f4f5f8" stroke="#444" stroke-width="1.200"/><path d="M9 6v6M6 9h6" stroke="#111" stroke-width="1.600"/></svg>
<svg class="ic" style="left:1415px;top:51px" width="18" height="17" viewBox="0 0 18 17"><path d="M4 9l4.500-9 4.500 9M5.500 6h6" fill="none" stroke="#1d4fa8" stroke-width="1.900"/><path d="M1 10v6M17 10v6M1 13h16" stroke="#111" stroke-width="1.300"/><path d="M1 13l3-2v4zM17 13l-3-2v4z" fill="#111"/></svg>
<svg class="ic" style="left:1438px;top:51px" width="18" height="17" viewBox="0 0 18 17"><path d="M1 10v6M17 10v6M1 13h16" stroke="#111" stroke-width="1.300"/><path d="M1 13l3-2v4zM17 13l-3-2v4z" fill="#111"/><path d="M15 1l-8 10" stroke="#e8b820" stroke-width="2.600"/><path d="M15.800 0l-1.600 2" stroke="#e07080" stroke-width="2.600"/><path d="M7 11l-1.500 2.500 2.700-1z" fill="#222"/></svg>
<svg class="ic" style="left:1461px;top:51px" width="18" height="17" viewBox="0 0 18 17"><path d="M1.500 3v13M14 3v13M1.500 9h12.500" stroke="#111" stroke-width="1.300" fill="none"/><path d="M1.500 9l3.500-2v4zM14 9l-3.500-2v4z" fill="#111"/><path d="M4 1v5M16.500 1v10M4 3.500h12.500" stroke="#2a63c0" stroke-width="1.200" fill="none"/><path d="M4 3.500l3-1.700v3.400zM16.500 3.500l-3-1.700v3.400z" fill="#2a63c0"/></svg>
<div class="sep" style="left:1161px;top:49px;height:20px"></div>
<div class="sep" style="left:1259px;top:49px;height:20px"></div>
<div class="sep" style="left:1334px;top:49px;height:20px"></div>
<div class="sep" style="left:1409px;top:49px;height:20px"></div>
<div class="sep" style="left:1484px;top:49px;height:20px"></div>
<div class="cb " style="left:1488px;top:48px;width:100px;height:21px"><span class="tx">STANDARD</span><span class="dd"></span></div>
<svg class="ic" style="left:1590px;top:50px" width="18" height="18" viewBox="0 0 18 18"><path d="M1 11v6M17 11v6M1 14h16" stroke="#111" stroke-width="1.300"/><path d="M1 14l3-2v4zM17 14l-3-2v4z" fill="#111"/><path d="M16 1l-7 8" stroke="#c98a4a" stroke-width="2.200"/><path d="M10 8l-5 4 1 1 5-3z" fill="#222"/></svg>
<div class="a" style="left:1614px;top:45px;width:1px;height:27px;background:#b9b8c3"></div>
<div class="tbrow" style="left:0;top:73px;width:1500px;height:27px"></div>
<div class="a" style="left:0;top:99px;width:1667px;height:1px;background:#c4c3cd"></div>
<div class="a" style="left:0;top:100px;width:1667px;height:2px;background:#b4b3be"></div>
<div class="grip" style="left:4px;top:76px;height:21px"></div><div class="grip" style="left:7px;top:76px;height:21px"></div>
<div class="cb " style="left:13px;top:75px;width:175px;height:23px"><span class="tx" style="left:9px;top:3px">AutoCAD <span class="h" style="width:36px">클래식</span></span><span class="dd"></span></div>
<svg class="ic" style="left:191px;top:79px" width="16" height="16" viewBox="0 0 18 18"><rect x="0" y="0" width="18" height="18" fill="#5d8fd0"/><rect x="1.500" y="1.500" width="15" height="15" fill="#3f72b8"/><circle cx="9" cy="9" r="5.200" fill="#c9ccd4" stroke="#444" stroke-width="1.800" stroke-dasharray="2.200 1.600"/><circle cx="9" cy="9" r="2.200" fill="#3f72b8" stroke="#444"/><path d="M0 0h4v4h-4zM14 0h4v4h-4zM0 14h4v4h-4zM14 14h4v4h-4z" fill="#dfe6f2"/></svg>
<svg class="ic" style="left:214px;top:79px" width="16" height="16" viewBox="0 0 18 18"><rect x="0.500" y="0.500" width="17" height="17" fill="#d5d8e0" stroke="#555" stroke-dasharray="1.500 1.500"/><path d="M2 9l7-7 7 7v8h-14z" fill="#1c1c1c"/><path d="M2 2v3M6 2v2M16 2v3" stroke="#333" stroke-width=".8"/></svg>
<div class="a" style="left:237px;top:73px;width:1px;height:27px;background:#c2c1cb"></div>
<div class="grip" style="left:241px;top:76px;height:21px"></div><div class="grip" style="left:244px;top:76px;height:21px"></div>
<svg class="ic" style="left:254px;top:79px" width="18" height="16" viewBox="0 0 18 16"><path d="M1 11l8-3 8 3-8 3z" fill="#8da5cc" stroke="#5a76a8" stroke-width=".7"/><path d="M1 8l8-3 8 3-8 3z" fill="#b6c6e0" stroke="#5a76a8" stroke-width=".7"/><path d="M1 5l8-3 8 3-8 3z" fill="#e4ebf6" stroke="#5a76a8" stroke-width=".7"/></svg>
<div class="cb" style="left:275px;top:76px;width:299px;height:21px"><span class="dd"></span><span class="tx" style="left:86px">0</span><i style="position:absolute;left:70px;top:4px;width:9px;height:9px;border:1px solid #000;background:#fff"></i></div>
<svg class="ic" style="left:282px;top:79px" width="10" height="15" viewBox="0 0 10 15"><path d="M5 0.700c-5 0-5 6-2 8.500v2.300h4v-2.300c3-2.500 3-8.500-2-8.500z" fill="#fdf3a8" stroke="#8a7a40" stroke-width=".9"/><path d="M3.200 12.500h3.600M3.700 14h2.600" stroke="#556" stroke-width="1.100"/></svg>
<svg class="ic" style="left:295px;top:79px" width="15" height="15" viewBox="0 0 15 15"><rect x="0" y="0" width="15" height="15" fill="#3f72b8" opacity=".0"/><circle cx="7.500" cy="7.500" r="6.500" fill="#f7dc2e" stroke="#2d62b4" stroke-width="1.200"/><path d="M0 1l2 1M15 1l-2 1M0 14l2-1M15 14l-2-1" stroke="#e0b010" stroke-width="1.600"/></svg>
<svg class="ic" style="left:312px;top:79px" width="15" height="15" viewBox="0 0 15 15"><circle cx="6" cy="6" r="5.300" fill="#c7d6ee" stroke="#5a80c0" stroke-width="1.100"/><circle cx="6" cy="6" r="2.300" fill="none" stroke="#7fa0d4"/><path d="M6 .5v11M.5 6h11M2 2l8 8M10 2l-8 8" stroke="#7fa0d4" stroke-width=".7"/><rect x="7" y="7" width="7.500" height="7.500" fill="#f4f6fa" stroke="#5a80c0"/></svg>
<svg class="ic" style="left:330px;top:79px" width="14" height="15" viewBox="0 0 14 15"><path d="M2 7v-3c0-4 6-4 6 0v1" fill="none" stroke="#c9a800" stroke-width="1.600"/><rect x="5" y="5.500" width="8.500" height="8.500" rx="1" fill="#ecd02c" stroke="#9a8200"/><path d="M7 7.500h5M7 9.500h5M7 11.500h5" stroke="#fff7b0" stroke-width=".9"/></svg>
<svg class="ic" style="left:578px;top:78px" width="18" height="17" viewBox="0 0 18 17"><path d="M3 11l7-3 7 3-7 3z" fill="#f2d21c" stroke="#9a8200" stroke-width=".7"/><path d="M3 8l7-3 7 3-7 3z" fill="#b6c6e0" stroke="#5a76a8" stroke-width=".7"/><path d="M3 5l7-3 7 3-7 3z" fill="#e4ebf6" stroke="#5a76a8" stroke-width=".7"/><path d="M1 16l4-4M5 12h-3M5 12v3" stroke="#1d3f85" stroke-width="1.200" fill="none"/></svg>
<svg class="ic" style="left:600px;top:79px" width="18" height="16" viewBox="0 0 18 16"><path d="M1 12l8-3 8 3-8 3z" fill="#8da5cc" stroke="#5a76a8" stroke-width=".7"/><path d="M1 9l8-3 8 3-8 3z" fill="#b6c6e0" stroke="#5a76a8" stroke-width=".7"/><path d="M1 6l8-3 8 3-8 3z" fill="#e4ebf6" stroke="#5a76a8" stroke-width=".7"/><path d="M13 1c-3-1.500-6 0-6 3.500" fill="none" stroke="#1d3f85" stroke-width="1.600"/><path d="M4.500 3.500h5l-2.500 3.500z" fill="#1d3f85"/></svg>
<div class="a" style="left:624px;top:73px;width:1px;height:27px;background:#c2c1cb"></div>
<div class="grip" style="left:628px;top:76px;height:21px"></div><div class="grip" style="left:631px;top:76px;height:21px"></div>
<div class="cb" style="left:639px;top:76px;width:150px;height:21px"><span class="dd"></span><i style="position:absolute;left:5px;top:5px;width:8px;height:8px;border:1px solid #000;background:#fff"></i><span class="tx" style="left:19px">ByLayer</span></div>
<div class="cb" style="left:795px;top:76px;width:160px;height:21px"><span class="dd"></span><i style="position:absolute;left:5px;top:9px;width:60px;height:1px;background:#000"></i><span class="tx" style="left:70px">ByLayer</span></div>
<div class="cb" style="left:961px;top:76px;width:125px;height:21px"><span class="dd"></span><i style="position:absolute;left:5px;top:9px;width:34px;height:1px;background:#000"></i><span class="tx" style="left:44px">ByLayer</span></div>
<div class="cb dis" style="left:1092px;top:76px;width:120px;height:21px"><span class="tx" style="left:9px;top:1px">ByColor</span><span class="dd"></span></div>
<div class="a" style="left:1217px;top:73px;width:1px;height:27px;background:#c2c1cb"></div>
<div class="grip" style="left:1219px;top:76px;height:21px"></div><div class="grip" style="left:1222px;top:76px;height:21px"></div>
<svg class="ic" style="left:1232px;top:77px" width="18" height="17" viewBox="0 0 18 17"><rect x="1" y="6" width="13" height="10" fill="#dfe9f7" stroke="#3b74c9"/><path d="M3.500 4v6c0 2 3 2 3 0v-5c0-1.500-1.500-1.500-1.500 0v4" fill="none" stroke="#1d3f85" stroke-width="1"/><path d="M16 1l-7 10" stroke="#e8b820" stroke-width="2.600"/><path d="M16.700 0l-1.400 2" stroke="#e07080" stroke-width="2.600"/><path d="M9 11l-1 3 2.500-1.500z" fill="#222"/></svg>
<div class="sep" style="left:1255px;top:77px;height:20px"></div>
<div class="a" style="left:1259px;top:76px;width:140px;height:21px;box-sizing:border-box;border:2px solid;border-color:#9c9ba6 #fafafc #fafafc #9c9ba6;background:#eae9ef"></div>
<div class="sep" style="left:1401px;top:77px;height:20px"></div>
<svg class="ic" style="left:1407px;top:78px" width="18" height="17" viewBox="0 0 18 17"><rect x="5" y="5" width="12" height="11" fill="#eef3fa" stroke="#333"/><rect x="9" y="8" width="5" height="7" fill="#2a63c0"/><circle cx="5" cy="12" r="2.300" fill="#2a63c0"/><path d="M3.500 0v6M.5 3h6" stroke="#1d3f85" stroke-width="1.500"/></svg>
<svg class="ic" style="left:1430px;top:78px" width="18" height="17" viewBox="0 0 18 17"><rect x="5" y="5" width="12" height="11" fill="url(#gPaper)" stroke="#333"/><circle cx="5" cy="12" r="2.300" fill="#2a63c0"/><path d="M.5 2h6" stroke="#1d3f85" stroke-width="1.500"/></svg>
<svg class="ic" style="left:1453px;top:78px" width="18" height="17" viewBox="0 0 18 17"><rect x="5" y="5" width="12" height="11" fill="#eef3fa" stroke="#333"/><rect x="10" y="8" width="5" height="7" fill="#2a63c0"/><circle cx="5.500" cy="12" r="2.300" fill="#2a63c0"/><path d="M.5 .5l7 6M7.500 .5l-7 6" stroke="#e02020" stroke-width="1.800"/></svg>
<svg class="ic" style="left:1476px;top:78px" width="18" height="17" viewBox="0 0 18 17"><path d="M2.500 1v8c0 2 3.500 2 3.500 0v-7c0-1.500-2-1.500-2 0v6" fill="none" stroke="#3b74c9" stroke-width="1.100"/><rect x="4" y="3" width="8" height="9" fill="#dfe9f7" stroke="#3b74c9" opacity=".8"/><rect x="8" y="7" width="9.500" height="9.500" fill="#4f7fd6" stroke="#2d56a8"/><rect x="10" y="7.500" width="5.500" height="3.500" fill="#e8eef8"/><rect x="10.500" y="13" width="4" height="3.500" fill="#2a4c96"/></svg>
<div class="a" style="left:1499px;top:73px;width:1px;height:27px;background:#b9b8c3"></div>
<div class="a" style="left:0;top:102px;width:278px;height:890px;background:#ecebee"></div>
<div class="a" style="left:278px;top:102px;width:2px;height:890px;background:#4a4a52"></div>
<div class="a" style="left:272px;top:102px;width:1px;height:890px;background:#fff"></div>
<div class="a" style="left:273px;top:102px;width:5px;height:890px;background:#e2e1e8"></div>
<div class="a" style="left:7px;top:107px;width:10px;height:10px;box-sizing:border-box;border:1px solid #5a7ab8;background:linear-gradient(#fff,#c8d6f0)"><i style="position:absolute;left:1px;top:3px;width:6px;height:2px;background:#0a1a5a"></i></div>
<div class="a" style="left:21px;top:110px;width:229px;height:2px;border-top:1px solid #fdfdff;border-bottom:1px solid #b5b4bf;box-sizing:border-box"></div>
<div class="a" style="left:21px;top:113px;width:229px;height:2px;border-top:1px solid #fdfdff;border-bottom:1px solid #b5b4bf;box-sizing:border-box"></div>
<div class="a" style="left:254px;top:107px;width:10px;height:10px;box-sizing:border-box;border:1px solid #5a7ab8;background:linear-gradient(#fff,#c8d6f0)"><svg width="8" height="8" style="position:absolute;left:0;top:0"><path d="M1.500 1.500l5 5M6.500 1.500l-5 5" stroke="#0a1a5a" stroke-width="1.700"/></svg></div>
<div class="cb " style="left:18px;top:125px;width:165px;height:24px"><span class="tx" style="left:4px;top:2px;font-size:12.500px">선택 요소가 없습니다</span><span class="dd" style="height:20px"></span></div>
<div class="a" style="left:188px;top:124px;width:25px;height:25px;box-sizing:border-box;border:1px solid #c4c3cd"></div>
<div class="a" style="left:212px;top:124px;width:25px;height:25px;box-sizing:border-box;border:1px solid #c4c3cd"></div>
<div class="a" style="left:236px;top:124px;width:25px;height:25px;box-sizing:border-box;border:1px solid #c4c3cd"></div>
<svg class="ic" style="left:191px;top:127px" width="18" height="18" viewBox="0 0 18 18"><rect x="3.500" y="3.500" width="11" height="11" fill="none" stroke="#333" stroke-dasharray="1.500 1.500"/><rect x="6" y="6" width="6" height="6" fill="#cfe0f3" stroke="#3b74c9"/><path d="M9 7v4M7 9h4" stroke="#1d3f85" stroke-width="1.200"/></svg>
<svg class="ic" style="left:216px;top:127px" width="18" height="18" viewBox="0 0 18 18"><rect x="3.500" y="2.500" width="8" height="9" fill="#fff" stroke="#555"/><path d="M5 4l4 4M9 4l-4 4" stroke="#e02020" stroke-width="1.400"/><path d="M9 7l0 8 2-2 1.500 3.500 1.500-.7-1.500-3.300 3 0z" fill="#fff" stroke="#000" stroke-width=".8"/></svg>
<svg class="ic" style="left:240px;top:127px" width="19" height="18" viewBox="0 0 19 18"><path d="M2 3h11l-4 5v6l-3-2v-4z" fill="#5d8fd0" stroke="#1d3f85" stroke-width=".9"/><ellipse cx="7.500" cy="3" rx="5.500" ry="1.300" fill="#a9c4ea" stroke="#1d3f85" stroke-width=".7"/><path d="M15 3l-4 6h2.500l-3 7 7-9h-3l2.500-4z" fill="#f4c430" stroke="#9a7a00" stroke-width=".6"/></svg>
<div class="phead" style="top:159px"><span class="tx">일반</span><svg class="chev" viewBox="0 0 10 11"><path d="M1.500 5l3.500-3.500 3.500 3.500M1.500 10l3.500-3.500 3.500 3.500" fill="none" stroke="#fff" stroke-width="1.500"/></svg></div>
<div class="prow" style="top:175px"><span class="k"><span class="h" style="width:24px">색상</span></span><span class="v w"><i style="display:inline-block;width:7px;height:7px;border:1px solid #000;background:#fff;margin:0 6px 0 2px;vertical-align:-1px"></i>ByLayer</span></div>
<div class="prow" style="top:191px"><span class="k"><span class="h" style="width:36px">도면층</span></span><span class="v w">0</span></div>
<div class="prow" style="top:207px"><span class="k"><span class="h" style="width:36px">선종류</span></span><span class="v w"><i style="display:inline-block;width:56px;height:1px;background:#000;margin:0 5px 0 2px;vertical-align:4px"></i>ByLayer</span></div>
<div class="prow" style="top:223px"><span class="k"><span class="h" style="width:36px">선종류</span> <span class="h" style="width:24px">축척</span></span><span class="v w">1</span></div>
<div class="prow" style="top:239px"><span class="k"><span class="h" style="width:48px">선가중치</span></span><span class="v w"><i style="display:inline-block;width:56px;height:1px;background:#000;margin:0 5px 0 2px;vertical-align:4px"></i>ByLayer</span></div>
<div class="prow" style="top:255px"><span class="k"><span class="h" style="width:24px">두께</span></span><span class="v w">0</span></div>
<div class="phead" style="top:279px"><span class="tx">3D 시각화</span><svg class="chev" viewBox="0 0 10 11"><path d="M1.500 5l3.500-3.500 3.500 3.500M1.500 10l3.500-3.500 3.500 3.500" fill="none" stroke="#fff" stroke-width="1.500"/></svg></div>
<div class="prow" style="top:295px"><span class="k"><span class="h" style="width:24px">재료</span></span><span class="v w">ByLayer</span></div>
<div class="prow" style="top:311px"><span class="k"><span class="h" style="width:36px">그림자</span> <span class="h" style="width:24px">표시</span></span><span class="v w"><span class="h" style="width:36px">그림자</span> <span class="h" style="width:24px">주사</span> <span class="h" style="width:12px">및</span> <span class="h" style="width:24px">수신</span></span></div>
<div class="phead" style="top:335px"><span class="tx">플롯 스타일</span><svg class="chev" viewBox="0 0 10 11"><path d="M1.500 5l3.500-3.500 3.500 3.500M1.500 10l3.500-3.500 3.500 3.500" fill="none" stroke="#fff" stroke-width="1.500"/></svg></div>
<div class="prow" style="top:351px"><span class="k"><span class="h" style="width:24px">플롯</span> <span class="h" style="width:36px">스타일</span></span><span class="v">ByColor</span></div>
<div class="prow" style="top:367px"><span class="k"><span class="h" style="width:24px">플롯</span> <span class="h" style="width:36px">스타일</span> ...</span><span class="v w"><span class="h" style="width:24px">창조</span>ISO-A3-HJ.ctb</span></div>
<div class="prow" style="top:383px"><span class="k"><span class="h" style="width:24px">플롯</span> <span class="h" style="width:48px">테이블을</span>...</span><span class="v"><span class="h" style="width:24px">모형</span></span></div>
<div class="prow" style="top:399px"><span class="k"><span class="h" style="width:24px">플롯</span> <span class="h" style="width:36px">테이블</span> ...</span><span class="v"><span class="h" style="width:36px">사용할</span> <span class="h" style="width:12px">수</span> <span class="h" style="width:48px">없습니다</span>.</span></div>
<div class="phead" style="top:423px"><span class="tx">뷰</span><svg class="chev" viewBox="0 0 10 11"><path d="M1.500 5l3.500-3.500 3.500 3.500M1.500 10l3.500-3.500 3.500 3.500" fill="none" stroke="#fff" stroke-width="1.500"/></svg></div>
<div class="prow" style="top:439px"><span class="k">X <span class="h" style="width:24px">중심</span></span><span class="v">84100</span></div>
<div class="prow" style="top:455px"><span class="k">Y <span class="h" style="width:24px">중심</span></span><span class="v">59400</span></div>
<div class="prow" style="top:471px"><span class="k">Z <span class="h" style="width:24px">중심</span></span><span class="v">0</span></div>
<div class="prow" style="top:487px"><span class="k"><span class="h" style="width:24px">높이</span></span><span class="v">119699.42</span></div>
<div class="prow" style="top:503px"><span class="k"><span class="h" style="width:12px">폭</span></span><span class="v">199649.03</span></div>
<div class="a" style="left:0;top:438px;width:9px;height:76px;background:#fff"></div>
<div class="a" style="left:1px;top:168px;width:8px;height:270px;background:#b4b4b8"></div>
<svg class="ic" style="left:0;top:160px" width="9" height="8"><path d="M1.500 6l3-3.500 3 3.500" fill="none" stroke="#000" stroke-width="1.800"/></svg>
<svg class="ic" style="left:0;top:515px" width="9" height="8"><path d="M1.500 2l3 3.500 3-3.500" fill="none" stroke="#000" stroke-width="1.800"/></svg>
<div class="a" style="left:17px;top:531px;width:244px;height:30px;box-sizing:border-box;border:1px solid #b5b4bd"></div>
<div class="a" style="left:0;top:577px;width:272px;height:1px;background:#fff"></div>
<div class="a" style="left:0;top:578px;width:272px;height:2px;background:#55545e"></div>
<div class="a" style="left:7px;top:587px;width:10px;height:10px;box-sizing:border-box;border:1px solid #5a7ab8;background:linear-gradient(#fff,#c8d6f0)"><i style="position:absolute;left:1px;top:3px;width:6px;height:2px;background:#0a1a5a"></i></div>
<div class="a" style="left:21px;top:590px;width:228px;height:2px;border-top:1px solid #fdfdff;border-bottom:1px solid #b5b4bf;box-sizing:border-box"></div>
<div class="a" style="left:21px;top:593px;width:228px;height:2px;border-top:1px solid #fdfdff;border-bottom:1px solid #b5b4bf;box-sizing:border-box"></div>
<div class="a" style="left:253px;top:587px;width:10px;height:10px;box-sizing:border-box;border:1px solid #5a7ab8;background:linear-gradient(#fff,#c8d6f0)"><svg width="8" height="8" style="position:absolute;left:0;top:0"><path d="M1.500 1.500l5 5M6.500 1.500l-5 5" stroke="#0a1a5a" stroke-width="1.700"/></svg></div>
<div class="a" style="left:8px;top:605px;width:91px;height:25px;box-sizing:border-box;border:1px solid #c4c3cd"></div>
<div class="a" style="left:41px;top:606px;width:1px;height:23px;background:#c4c3cd"></div>
<div class="a" style="left:74px;top:606px;width:1px;height:23px;background:#c4c3cd"></div>
<svg class="ic" style="left:13px;top:610px" width="16" height="15" viewBox="0 0 16 15"><path d="M.8 3.500h10.700l3.700 3.700v7h-14.400z" fill="url(#gPaper)" stroke="#1d3f85" stroke-width="1.300"/><path d="M11.500 3.500v3.700h3.700" fill="#fff" stroke="#1d3f85" stroke-width="1"/><path d="M4.500 2c-.8-1.800-3.200-1.500-3.200.5v3.500c0 1.500 2 1.500 2 0v-2.500" fill="none" stroke="#000" stroke-width="1"/></svg>
<div class="a" style="left:33px;top:615px;width:0;height:0;border:3px solid transparent;border-top:3px solid #555;border-bottom:none"></div>
<svg class="ic" style="left:47px;top:610px" width="14" height="15" viewBox="0 0 14 15"><path d="M.7 .7h9.300l3.300 3.300v10.300h-12.600z" fill="#d8dcf4" stroke="#8a90d0" stroke-width=".9" stroke-dasharray="1.500 1"/><path d="M10 5.500a3.800 3.800 0 0 0-6.500 0M4 10a3.800 3.800 0 0 0 6.500 0" fill="none" stroke="#28a038" stroke-width="1.900"/><path d="M11.500 2.500v4.500h-4.500zM2.500 13v-4.500h4.500z" fill="#28a038"/></svg>
<div class="a" style="left:66px;top:615px;width:0;height:0;border:3px solid transparent;border-top:3px solid #555;border-bottom:none"></div>
<svg class="ic" style="left:78px;top:610px" width="16" height="16" viewBox="0 0 16 16"><rect x="0.500" y="0.500" width="15" height="15" rx="2" fill="url(#gHelp)" stroke="#17408f"/><path d="M5 5.500c0-3.500 6-3.500 6-.3 0 2.100-2.800 2.100-2.800 4.300" fill="none" stroke="#fff" stroke-width="2.100"/><circle cx="8.200" cy="12.600" r="1.300" fill="#fff"/></svg>
<div class="phead" style="top:641px;left:8px;width:254px;height:18px;line-height:14px"><span class="tx" style="left:10px">파일 참조</span></div>
<div class="a" style="left:227px;top:644px;width:14px;height:14px;box-sizing:border-box;border:2px solid #1d3f85;background:#e4ecf8"><i style="position:absolute;left:1px;top:2px;width:8px;height:1px;background:#1d3f85;box-shadow:0 2px 0 #1d3f85,0 4px 0 #1d3f85,0 6px 0 #1d3f85"></i><i style="position:absolute;left:4px;top:1px;width:1px;height:8px;background:#1d3f85"></i></div>
<div class="a" style="left:244px;top:644px;width:14px;height:14px;box-sizing:border-box;border:2px solid #1d3f85;background:#e4ecf8"><i style="position:absolute;left:2px;top:2px;width:3px;height:3px;border:1px solid #1d3f85"></i><i style="position:absolute;left:6px;top:6px;width:3px;height:3px;background:#6a8a5a"></i><i style="position:absolute;left:4px;top:5px;width:3px;height:1px;background:#1d3f85"></i></div>
<div class="a" style="left:9px;top:658px;width:253px;height:176px;background:#fff"></div>
<div class="a" style="left:9px;top:659px;width:253px;height:19px;background:linear-gradient(#fff,#f3f3f6 80%,#d8d7df);border-bottom:1px solid #c9c8d2;box-sizing:border-box"></div>
<div class="a" style="left:26px;top:662px;width:1px;height:13px;background:#c9c8d2;border-right:1px solid #fff"></div>
<div class="a" style="left:121px;top:662px;width:1px;height:13px;background:#c9c8d2;border-right:1px solid #fff"></div>
<div class="a" style="left:193px;top:662px;width:1px;height:13px;background:#c9c8d2;border-right:1px solid #fff"></div>
<div class="a" style="left:252px;top:662px;width:1px;height:13px;background:#c9c8d2;border-right:1px solid #fff"></div>
<div class="t" style="left:34px;top:662px;width:54px">참조 이름</div>
<div class="a" style="left:94px;top:666px;width:0;height:0;border:4px solid transparent;border-bottom:5px solid #a6a5b0;border-top:none"></div>
<div class="t" style="left:129px;top:662px;width:30px">상태</div>
<div class="t" style="left:201px;top:662px;width:30px">크기</div>
<div class="t" style="left:257px;top:662px;width:5px">날</div>
<svg class="ic" style="left:9.5px;top:679px" width="16" height="16" viewBox="0 0 16 16"><path d="M1 7l6 2 8 3v3.500h-14z" fill="#f4c818" stroke="#c89808" stroke-width=".6"/><path d="M1 7v-5l2-1.500 5 .5 6 9.500-7-1.500z" fill="#2f5fa8"/><path d="M3 2l5 1 4.500 7" fill="none" stroke="#9ab8e0" stroke-width="1"/><path d="M4 .5v5M1.500 3h5M2.300 1.300l3.400 3.400M5.700 1.300l-3.400 3.400" stroke="#fff" stroke-width=".8"/></svg>
<div class="t" style="left:34px;top:680px;width:84px">A3-01 <span class="h" style="width:24px">입면</span>...</div>
<div class="t" style="left:146px;top:680px;width:44px">열림</div>
<div class="t" style="left:201px;top:680px;width:44px">189KB</div>
<div class="t" style="left:257px;top:680px;width:5px">현</div>
<svg class="ic" style="left:9.5px;top:696px" width="16" height="15" viewBox="0 0 16 15"><path d="M.8 3.500h10.700l3.700 3.700v7h-14.400z" fill="url(#gPaper)" stroke="#1d3f85" stroke-width="1.300"/><path d="M11.500 3.500v3.700h3.700" fill="#fff" stroke="#1d3f85" stroke-width="1"/><path d="M4.500 2c-.8-1.800-3.200-1.500-3.200.5v3.500c0 1.500 2 1.500 2 0v-2.500" fill="none" stroke="#000" stroke-width="1"/></svg>
<div class="t" style="left:34px;top:696px;width:84px">XR-ELE1</div>
<div class="t" style="left:146px;top:696px;width:44px">로드됨</div>
<div class="t" style="left:201px;top:696px;width:44px">168KB</div>
<div class="t" style="left:257px;top:696px;width:5px">부</div>
<svg class="ic" style="left:9.5px;top:713px" width="16" height="15" viewBox="0 0 16 15"><path d="M.8 3.500h10.700l3.700 3.700v7h-14.400z" fill="url(#gPaper)" stroke="#1d3f85" stroke-width="1.300"/><path d="M11.500 3.500v3.700h3.700" fill="#fff" stroke="#1d3f85" stroke-width="1"/><path d="M4.500 2c-.8-1.800-3.200-1.500-3.200.5v3.500c0 1.500 2 1.500 2 0v-2.500" fill="none" stroke="#000" stroke-width="1"/></svg>
<div class="t" style="left:34px;top:713px;width:84px">XR-SHT</div>
<div class="t" style="left:146px;top:713px;width:44px">로드됨</div>
<div class="t" style="left:201px;top:713px;width:44px">584KB</div>
<div class="t" style="left:257px;top:713px;width:5px">부</div>
<div class="a" style="left:9px;top:834px;width:253px;height:14px;background:#f4f4fb;border-top:1px solid #e2e2ea;box-sizing:border-box"></div>
<div class="a" style="left:10px;top:835px;width:12px;height:12px;box-sizing:border-box;border:1px solid #b4c4e4;border-radius:2px;background:#d4e0f8"><svg width="10" height="10" style="position:absolute;left:0;top:0"><path d="M6.500 2l-3 3 3 3" fill="none" stroke="#4d6185" stroke-width="1.800"/></svg></div>
<div class="a" style="left:249px;top:835px;width:12px;height:12px;box-sizing:border-box;border:1px solid #b4c4e4;border-radius:2px;background:#d4e0f8"><svg width="10" height="10" style="position:absolute;left:0;top:0"><path d="M3.500 2l3 3-3 3" fill="none" stroke="#4d6185" stroke-width="1.800"/></svg></div>
<div class="a" style="left:23px;top:835px;width:70px;height:12px;box-sizing:border-box;border:1px solid #a9bce4;border-radius:2px;background:linear-gradient(#d9e4fb,#c2d2f6)"><i style="position:absolute;left:31px;top:3px;width:1px;height:5px;background:#8aa0cc;box-shadow:2px 0 0 #8aa0cc,4px 0 0 #8aa0cc,6px 0 0 #8aa0cc"></i></div>
<svg class="ic" style="left:131px;top:849px" width="9" height="10"><path d="M4.500 0l4 4h-8zM4.500 10l4-4h-8z" fill="#b9b8c4"/></svg>
<div class="phead" style="top:860px;left:8px;width:254px;height:18px;line-height:14px"><span class="tx" style="left:10px">상세 정보</span></div>
<div class="a" style="left:209px;top:864px;width:11px;height:11px;box-sizing:border-box;border:1px solid #3d5c96;background:#e4ecf8"><i style="position:absolute;left:2px;top:2px;width:5px;height:1px;background:#3d5c96;box-shadow:0 2px 0 #3d5c96,0 4px 0 #3d5c96"></i></div>
<div class="a" style="left:224px;top:864px;width:11px;height:11px;box-sizing:border-box;border:1px solid #3d5c96;background:#b8d8c8"><i style="position:absolute;left:2px;top:2px;width:4px;height:4px;border:1px solid #b04030;border-radius:3px"></i></div>
<svg class="ic" style="left:246px;top:863px" width="10" height="11" viewBox="0 0 10 11"><path d="M1.500 5l3.500-3.500 3.500 3.500M1.500 10l3.500-3.500 3.500 3.500" fill="none" stroke="#fff" stroke-width="1.500"/></svg>
<div class="a" style="left:9px;top:877px;width:253px;height:72px;box-sizing:border-box;border:1px solid #b5b4bd;border-top:none;background:#efeef3"><i style="position:absolute;left:80px;top:0;width:1px;height:72px;background:#e0dfe7"></i><i style="position:absolute;left:0;top:17px;width:253px;height:1px;background:#e0dfe7;box-shadow:0 18px 0 #e0dfe7,0 36px 0 #e0dfe7"></i></div>
<div class="a" style="left:279px;top:102px;width:26px;height:890px;background:#eae9ef"></div>
<div class="a" style="left:281px;top:102px;width:23px;height:434px;background:linear-gradient(90deg,#f1f1f5,#e4e3ea);border-right:1px solid #c2c1cb;border-bottom:1px solid #c2c1cb;box-sizing:border-box"></div>
<div class="a" style="left:282px;top:104px;width:20px;height:2px;border-top:1px solid #fff;border-bottom:1px solid #a9a8b3;box-sizing:border-box"></div>
<div class="a" style="left:282px;top:107px;width:20px;height:2px;border-top:1px solid #fff;border-bottom:1px solid #a9a8b3;box-sizing:border-box"></div>
<svg class="ic" style="left:283px;top:114px" width="16" height="16" viewBox="0 0 16 16"><path d="M2 14l12-12" stroke="#111" stroke-width="1.400"/><rect x="0.5" y="12.5" width="3" height="3" fill="#1f7fe6"/><rect x="12.5" y="0.5" width="3" height="3" fill="#1f7fe6"/></svg>
<svg class="ic" style="left:283px;top:135px" width="16" height="16" viewBox="0 0 16 16"><path d="M1 15l14-14" stroke="#111" stroke-width="1.400"/><path d="M15 1l-4.500 1.500 3 3zM1 15l4.500-1.500-3-3z" fill="#111"/><rect x="6.5" y="6.5" width="3" height="3" fill="#1f7fe6"/></svg>
<svg class="ic" style="left:283px;top:158px" width="16" height="16" viewBox="0 0 16 16"><path d="M2 12h8c6 0 6-8 0-8" fill="none" stroke="#1d3f85" stroke-width="1.300"/><rect x="0.5" y="10.5" width="3" height="3" fill="#1f7fe6"/><rect x="7.5" y="10.5" width="3" height="3" fill="#1f7fe6"/><rect x="8.5" y="2.5" width="3" height="3" fill="#1f7fe6"/></svg>
<svg class="ic" style="left:283px;top:180px" width="16" height="16" viewBox="0 0 16 16"><path d="M8 1.500l6.500 5-2.500 8h-8l-2.500-8z" fill="#eef2f8" stroke="#1d3f85" stroke-width="1.500"/></svg>
<svg class="ic" style="left:283px;top:201px" width="16" height="16" viewBox="0 0 16 16"><path d="M2 4h12v8h-12z" fill="#eef2f8" stroke="#1d3f85" stroke-width="1.400"/><rect x="0.5" y="10.5" width="3" height="3" fill="#1f7fe6"/><rect x="12.5" y="2.5" width="3" height="3" fill="#1f7fe6"/></svg>
<svg class="ic" style="left:283px;top:223px" width="16" height="16" viewBox="0 0 16 16"><path d="M2 14c0-7 5-12 12-12" fill="none" stroke="#1d3f85" stroke-width="1.400"/><rect x="0.5" y="12.5" width="3" height="3" fill="#1f7fe6"/><rect x="12.5" y="0.5" width="3" height="3" fill="#1f7fe6"/><rect x="4.0" y="4.0" width="3" height="3" fill="#1f7fe6"/></svg>
<svg class="ic" style="left:283px;top:246px" width="16" height="16" viewBox="0 0 16 16"><circle cx="8" cy="8" r="6.500" fill="#eef2f8" stroke="#111" stroke-width="1.400"/><path d="M8 8l4-4" stroke="#1f7fe6" stroke-width="1.300"/><rect x="6.5" y="6.5" width="3" height="3" fill="#1f7fe6"/></svg>
<svg class="ic" style="left:283px;top:268px" width="16" height="16" viewBox="0 0 16 16"><path d="M4 4c0-4 6-4 6 0 3-2 6 2 3 4 3 2 0 7-3 5-2 3-7 1-6-2-4-1-4-6 0-7z" fill="#eef2f8" stroke="#111" stroke-width="1.400"/></svg>
<svg class="ic" style="left:283px;top:290px" width="16" height="16" viewBox="0 0 16 16"><path d="M1 12c3-9 6-9 8-3s4 3 6-4" fill="none" stroke="#111" stroke-width="1.400"/></svg>
<svg class="ic" style="left:283px;top:312px" width="16" height="16" viewBox="0 0 16 16"><ellipse cx="8" cy="8" rx="6.500" ry="3.800" fill="#eef2f8" stroke="#111" stroke-width="1.400"/><rect x="0.0" y="6.5" width="3" height="3" fill="#1f7fe6"/><rect x="13.0" y="6.5" width="3" height="3" fill="#1f7fe6"/><rect x="6.5" y="2.7" width="3" height="3" fill="#1f7fe6"/></svg>
<svg class="ic" style="left:283px;top:334px" width="16" height="16" viewBox="0 0 16 16"><path d="M3 11c-4-4 2-8 7-7 5 1 5 6 0 7" fill="none" stroke="#1d3f85" stroke-width="1.400"/><rect x="1.5" y="9.5" width="3" height="3" fill="#1f7fe6"/><rect x="8.5" y="9.5" width="3" height="3" fill="#1f7fe6"/></svg>
<svg class="ic" style="left:283px;top:357px" width="16" height="16" viewBox="0 0 16 16"><rect x="3" y="1" width="9" height="8" fill="#dfe9f7" stroke="#3b74c9"/><rect x="1" y="5" width="9" height="7" fill="#b6cdea" stroke="#3b74c9"/><circle cx="9.500" cy="11" r="3.300" fill="#f7dc2e" stroke="#1d3f85"/><path d="M16 12v4h-4z" fill="#000"/></svg>
<svg class="ic" style="left:283px;top:379px" width="16" height="16" viewBox="0 0 16 16"><rect x="2" y="2" width="9" height="7" fill="#b6cdea" stroke="#3b74c9"/><circle cx="10" cy="10.500" r="3.600" fill="#f7dc2e" stroke="#1d3f85"/></svg>
<svg class="ic" style="left:283px;top:400px" width="16" height="16" viewBox="0 0 16 16"><rect x="6.500" y="6.500" width="3" height="3" fill="#1f7fe6"/></svg>
<svg class="ic" style="left:283px;top:422px" width="16" height="16" viewBox="0 0 16 16"><rect x="2.500" y="2.500" width="11" height="11" fill="#eef2f8" stroke="#1d3f85"/><path d="M3 7l4-4M3 11l8-8M5 13l8-8M9 13l4-4M3 5l8 8M7 3l6 6M3 9l4 4" stroke="#1d3f85" stroke-width=".8"/><path d="M0 2.500h16M0 13.500h16M2.500 0v16M13.500 0v16" stroke="#1d3f85" stroke-width="1"/></svg>
<svg class="ic" style="left:283px;top:445px" width="16" height="16" viewBox="0 0 16 16"><rect x="2.500" y="2.500" width="11" height="11" fill="url(#gGrad)" stroke="#1d3f85"/><path d="M0 2.500h16M0 13.500h16M2.500 0v16M13.500 0v16" stroke="#1d3f85" stroke-width="1"/></svg>
<svg class="ic" style="left:283px;top:466px" width="16" height="16" viewBox="0 0 16 16"><path d="M1.500 2.500h10l3 3v8h-13z" fill="#dfe9f7" stroke="#3b74c9" stroke-width="1.300"/><circle cx="8" cy="9" r="3" fill="#fff" stroke="#3b74c9" stroke-width="1.200"/></svg>
<svg class="ic" style="left:283px;top:488px" width="16" height="16" viewBox="0 0 16 16"><rect x="1.500" y="2.500" width="13" height="11" fill="#eaf1fb" stroke="#3b74c9"/><rect x="1.500" y="2.500" width="13" height="3" fill="#3b74c9"/><path d="M1.500 8h13M1.500 10.700h13M6 5.500v8M10.500 5.500v8" stroke="#3b74c9" stroke-width=".9"/></svg>
<svg class="ic" style="left:283px;top:510px" width="16" height="16" viewBox="0 0 16 16"><path d="M1.500 15l6.500-14 6.500 14M4 10h8" fill="none" stroke="#111" stroke-width="1.700"/></svg>
<div class="a" style="left:305px;top:102px;width:2px;height:800px;background:#8e8d98"></div>
<svg id="cad" width="1332" height="800" viewBox="307 102 1332 800" shape-rendering="crispEdges" style="position:absolute;left:307px;top:102px;background:#000">
<rect x="307" y="102" width="1332" height="800" fill="#000"/>
<g fill="none" stroke="#fff" stroke-width="1">
<rect x="412.5" y="105.5" width="1121" height="792"/>
<rect x="460.5" y="133.5" width="931" height="736"/>
</g>
<path d="M1066.6 355V384.5M1078.6 355V384.5M1090.7 355V384.5M1102.7 355V384.5M1114.8 355V384.5M1126.8 355V384.5M1138.9 355V384.5M1150.9 355V384.5M1163.0 355V384.5M1175.0 355V384.5M1187.1 355V384.5M1199.1 355V384.5M1211.2 355V384.5M1223.2 355V384.5M1235.3 355V384.5M1247.3 355V384.5M1259.4 355V384.5M1053.4 371.5H1270M1053.4 363.2H1270" fill="none" stroke="#00ffff" stroke-width="1"/>
<rect x="820.3" y="329.3" width="40.3" height="25.1" fill="#404040"/>
<path d="M821.8 330.9h3v2.3h-3zM825.8 330.9h2v2.3h-2zM828.8 330.9h2v2.3h-2zM832.4 330.9h2v2.3h-2zM836.0 330.9h4v2.3h-4zM841.0 330.9h1v2.3h-1zM843.6 330.9h1v2.3h-1zM846.2 330.9h2v2.3h-2zM849.2 330.9h3.5v2.3h-3.5zM854.3 330.9h2v2.3h-2zM857.3 330.9h2.5v2.3h-2.5zM822.3 334.8h1v2.3h-1zM824.3 334.8h1v2.3h-1zM826.3 334.8h2v2.3h-2zM829.3 334.8h2v2.3h-2zM832.3 334.8h3v2.3h-3zM836.3 334.8h4v2.3h-4zM841.9 334.8h2v2.3h-2zM844.9 334.8h2v2.3h-2zM847.9 334.8h3.5v2.3h-3.5zM852.4 334.8h4v2.3h-4zM858.0 334.8h1.8v2.3h-1.8zM822.8 338.6h4v2.3h-4zM827.8 338.6h1.5v2.3h-1.5zM830.6 338.6h1v2.3h-1zM832.9 338.6h3.5v2.3h-3.5zM838.0 338.6h3v2.3h-3zM842.0 338.6h2v2.3h-2zM845.3 338.6h3v2.3h-3zM849.9 338.6h4v2.3h-4zM855.5 338.6h3v2.3h-3zM822.8 342.5h2v2.3h-2zM825.8 342.5h2v2.3h-2zM829.1 342.5h1v2.3h-1zM831.7 342.5h3.5v2.3h-3.5zM836.2 342.5h4v2.3h-4zM841.2 342.5h3v2.3h-3zM845.8 342.5h2v2.3h-2zM849.4 342.5h3.5v2.3h-3.5zM853.9 342.5h2v2.3h-2zM856.9 342.5h2v2.3h-2zM821.8 346.3h1.5v2.3h-1.5zM824.3 346.3h1v2.3h-1zM826.3 346.3h3v2.3h-3zM830.3 346.3h2v2.3h-2zM833.6 346.3h4v2.3h-4zM838.9 346.3h2v2.3h-2zM842.2 346.3h3.5v2.3h-3.5zM846.7 346.3h2v2.3h-2zM849.7 346.3h3v2.3h-3zM853.7 346.3h2v2.3h-2zM856.7 346.3h2v2.3h-2zM821.8 350.2h3v2.3h-3zM826.4 350.2h2v2.3h-2zM829.7 350.2h2v2.3h-2zM833.0 350.2h1v2.3h-1zM835.3 350.2h2v2.3h-2zM838.3 350.2h4v2.3h-4zM843.3 350.2h3.5v2.3h-3.5zM847.8 350.2h3v2.3h-3zM851.8 350.2h4v2.3h-4zM856.8 350.2h3v2.3h-3z" fill="#000" shape-rendering="auto"/>
<rect x="860.6" y="329.3" width="49.1" height="42" fill="#404040"/>
<path d="M861.6 330.9h1v2.3h-1zM863.6 330.9h2v2.3h-2zM866.6 330.9h3.5v2.3h-3.5zM871.4 330.9h2v2.3h-2zM874.4 330.9h3v2.3h-3zM878.4 330.9h3v2.3h-3zM882.4 330.9h2v2.3h-2zM886.0 330.9h4v2.3h-4zM891.3 330.9h3v2.3h-3zM895.9 330.9h3v2.3h-3zM900.2 330.9h1v2.3h-1zM902.2 330.9h2v2.3h-2zM905.8 330.9h2v2.3h-2zM863.1 334.8h3v2.3h-3zM867.1 334.8h3v2.3h-3zM871.1 334.8h1.5v2.3h-1.5zM873.6 334.8h1v2.3h-1zM875.6 334.8h2v2.3h-2zM878.6 334.8h1.5v2.3h-1.5zM881.4 334.8h3v2.3h-3zM885.4 334.8h2v2.3h-2zM889.0 334.8h3.5v2.3h-3.5zM893.8 334.8h4v2.3h-4zM899.1 334.8h2v2.3h-2zM902.7 334.8h1.5v2.3h-1.5zM905.8 334.8h3.1v2.3h-3.1zM862.1 338.6h2v2.3h-2zM865.4 338.6h2v2.3h-2zM868.7 338.6h3.5v2.3h-3.5zM873.8 338.6h2v2.3h-2zM877.1 338.6h3v2.3h-3zM881.7 338.6h2v2.3h-2zM884.7 338.6h2v2.3h-2zM887.7 338.6h3v2.3h-3zM892.0 338.6h4v2.3h-4zM897.6 338.6h2v2.3h-2zM900.9 338.6h4v2.3h-4zM906.5 338.6h2v2.3h-2zM863.1 342.5h3v2.3h-3zM867.4 342.5h3.5v2.3h-3.5zM871.9 342.5h4v2.3h-4zM877.2 342.5h3.5v2.3h-3.5zM881.7 342.5h4v2.3h-4zM886.7 342.5h3.5v2.3h-3.5zM891.2 342.5h1v2.3h-1zM893.2 342.5h2v2.3h-2zM896.2 342.5h3.5v2.3h-3.5zM900.7 342.5h4v2.3h-4zM905.7 342.5h3.2v2.3h-3.2zM862.1 346.3h4v2.3h-4zM867.1 346.3h1v2.3h-1zM869.7 346.3h3.5v2.3h-3.5zM874.2 346.3h1v2.3h-1zM876.5 346.3h2v2.3h-2zM879.5 346.3h1.5v2.3h-1.5zM882.0 346.3h1v2.3h-1zM884.0 346.3h1v2.3h-1zM886.0 346.3h1v2.3h-1zM888.0 346.3h2v2.3h-2zM891.3 346.3h1.5v2.3h-1.5zM893.8 346.3h3.5v2.3h-3.5zM898.3 346.3h3v2.3h-3zM902.3 346.3h2v2.3h-2zM905.3 346.3h3.6v2.3h-3.6zM862.1 350.2h1v2.3h-1zM864.1 350.2h2v2.3h-2zM867.1 350.2h2v2.3h-2zM870.4 350.2h2v2.3h-2zM873.4 350.2h2v2.3h-2zM877.0 350.2h3v2.3h-3zM881.0 350.2h2v2.3h-2zM884.6 350.2h4v2.3h-4zM889.6 350.2h2v2.3h-2zM892.6 350.2h1v2.3h-1zM894.9 350.2h4v2.3h-4zM899.9 350.2h1v2.3h-1zM902.5 350.2h4v2.3h-4zM907.5 350.2h1.4v2.3h-1.4zM863.1 354.1h3v2.3h-3zM867.4 354.1h1.5v2.3h-1.5zM870.2 354.1h2v2.3h-2zM873.5 354.1h3v2.3h-3zM878.1 354.1h3.5v2.3h-3.5zM882.6 354.1h3.5v2.3h-3.5zM887.1 354.1h3.5v2.3h-3.5zM891.6 354.1h2v2.3h-2zM894.6 354.1h1.5v2.3h-1.5zM897.1 354.1h1.5v2.3h-1.5zM899.6 354.1h2v2.3h-2zM902.6 354.1h3v2.3h-3zM906.6 354.1h1.5v2.3h-1.5zM863.1 357.9h1v2.3h-1zM865.4 357.9h1v2.3h-1zM867.4 357.9h3v2.3h-3zM871.7 357.9h2v2.3h-2zM875.3 357.9h2v2.3h-2zM878.3 357.9h1.5v2.3h-1.5zM880.8 357.9h2v2.3h-2zM884.4 357.9h1.5v2.3h-1.5zM886.9 357.9h3v2.3h-3zM890.9 357.9h1.5v2.3h-1.5zM893.4 357.9h1v2.3h-1zM895.4 357.9h1.5v2.3h-1.5zM897.9 357.9h1v2.3h-1zM899.9 357.9h1v2.3h-1zM902.5 357.9h2v2.3h-2zM905.8 357.9h3v2.3h-3zM862.1 361.8h3.5v2.3h-3.5zM866.6 361.8h3.5v2.3h-3.5zM871.7 361.8h2v2.3h-2zM874.7 361.8h3v2.3h-3zM878.7 361.8h2v2.3h-2zM881.7 361.8h1v2.3h-1zM884.3 361.8h2v2.3h-2zM887.3 361.8h3v2.3h-3zM891.3 361.8h3v2.3h-3zM895.6 361.8h2v2.3h-2zM898.9 361.8h2v2.3h-2zM901.9 361.8h4v2.3h-4zM907.5 361.8h1v2.3h-1zM862.6 365.6h1.5v2.3h-1.5zM865.1 365.6h4v2.3h-4zM870.7 365.6h1v2.3h-1zM873.3 365.6h3.5v2.3h-3.5zM878.4 365.6h2v2.3h-2zM881.4 365.6h3v2.3h-3zM885.4 365.6h1v2.3h-1zM887.7 365.6h1v2.3h-1zM890.0 365.6h2v2.3h-2zM893.0 365.6h1.5v2.3h-1.5zM896.1 365.6h1.5v2.3h-1.5zM898.6 365.6h3v2.3h-3zM902.9 365.6h2v2.3h-2zM906.5 365.6h1.5v2.3h-1.5z" fill="#000" shape-rendering="auto"/>
<rect x="1216" y="327" width="60" height="45" fill="#404040"/>
<path d="M1217.5 328.6h3v2.3h-3zM1221.5 328.6h2v2.3h-2zM1225.1 328.6h3.5v2.3h-3.5zM1229.6 328.6h3v2.3h-3zM1233.6 328.6h4v2.3h-4zM1239.2 328.6h2v2.3h-2zM1242.2 328.6h1.5v2.3h-1.5zM1245.3 328.6h3v2.3h-3zM1249.9 328.6h2v2.3h-2zM1252.9 328.6h1.5v2.3h-1.5zM1255.4 328.6h4v2.3h-4zM1261.0 328.6h3.5v2.3h-3.5zM1265.5 328.6h3.5v2.3h-3.5zM1270.0 328.6h1.5v2.3h-1.5zM1272.5 328.6h2v2.3h-2zM1218.0 332.5h2v2.3h-2zM1221.6 332.5h3.5v2.3h-3.5zM1226.7 332.5h2v2.3h-2zM1230.3 332.5h1.5v2.3h-1.5zM1233.1 332.5h1v2.3h-1zM1235.1 332.5h1.5v2.3h-1.5zM1238.2 332.5h1.5v2.3h-1.5zM1241.0 332.5h3.5v2.3h-3.5zM1246.1 332.5h4v2.3h-4zM1251.4 332.5h2v2.3h-2zM1255.0 332.5h3v2.3h-3zM1259.3 332.5h3v2.3h-3zM1263.9 332.5h3v2.3h-3zM1267.9 332.5h2v2.3h-2zM1270.9 332.5h4v2.3h-4zM1217.5 336.3h3.5v2.3h-3.5zM1222.3 336.3h3v2.3h-3zM1226.3 336.3h3.5v2.3h-3.5zM1230.8 336.3h3.5v2.3h-3.5zM1235.6 336.3h2v2.3h-2zM1238.6 336.3h1v2.3h-1zM1241.2 336.3h4v2.3h-4zM1246.8 336.3h1v2.3h-1zM1249.1 336.3h4v2.3h-4zM1254.1 336.3h2v2.3h-2zM1257.1 336.3h1v2.3h-1zM1259.4 336.3h2v2.3h-2zM1263.0 336.3h4v2.3h-4zM1268.0 336.3h1v2.3h-1zM1270.0 336.3h2v2.3h-2zM1273.3 336.3h1.9v2.3h-1.9zM1217.5 340.2h1v2.3h-1zM1219.8 340.2h1v2.3h-1zM1221.8 340.2h1v2.3h-1zM1223.8 340.2h1.5v2.3h-1.5zM1226.9 340.2h2v2.3h-2zM1230.2 340.2h1.5v2.3h-1.5zM1232.7 340.2h4v2.3h-4zM1238.0 340.2h2v2.3h-2zM1241.3 340.2h1.5v2.3h-1.5zM1244.4 340.2h2v2.3h-2zM1248.0 340.2h4v2.3h-4zM1253.6 340.2h3.5v2.3h-3.5zM1258.1 340.2h3v2.3h-3zM1262.4 340.2h2v2.3h-2zM1265.4 340.2h2v2.3h-2zM1269.0 340.2h2v2.3h-2zM1272.3 340.2h2.9v2.3h-2.9zM1217.0 344.0h4v2.3h-4zM1222.6 344.0h3v2.3h-3zM1226.9 344.0h1v2.3h-1zM1229.5 344.0h3v2.3h-3zM1233.5 344.0h1v2.3h-1zM1235.8 344.0h2v2.3h-2zM1239.1 344.0h3.5v2.3h-3.5zM1243.9 344.0h3v2.3h-3zM1248.2 344.0h3.5v2.3h-3.5zM1253.3 344.0h1v2.3h-1zM1255.3 344.0h3.5v2.3h-3.5zM1259.8 344.0h2v2.3h-2zM1263.1 344.0h3.5v2.3h-3.5zM1268.2 344.0h2v2.3h-2zM1271.5 344.0h1.5v2.3h-1.5zM1274.3 344.0h0.9v2.3h-0.9zM1218.0 347.9h4v2.3h-4zM1223.3 347.9h2v2.3h-2zM1226.9 347.9h1v2.3h-1zM1228.9 347.9h3v2.3h-3zM1232.9 347.9h2v2.3h-2zM1235.9 347.9h3.5v2.3h-3.5zM1240.7 347.9h1.5v2.3h-1.5zM1243.5 347.9h1.5v2.3h-1.5zM1246.6 347.9h3.5v2.3h-3.5zM1251.1 347.9h1v2.3h-1zM1253.4 347.9h2v2.3h-2zM1256.4 347.9h2v2.3h-2zM1259.4 347.9h1v2.3h-1zM1261.7 347.9h3.5v2.3h-3.5zM1266.2 347.9h3v2.3h-3zM1270.8 347.9h2v2.3h-2zM1273.8 347.9h1.4v2.3h-1.4zM1217.0 351.8h3v2.3h-3zM1221.0 351.8h2v2.3h-2zM1224.0 351.8h4v2.3h-4zM1229.3 351.8h2v2.3h-2zM1232.3 351.8h4v2.3h-4zM1237.6 351.8h3v2.3h-3zM1241.6 351.8h2v2.3h-2zM1244.9 351.8h3v2.3h-3zM1249.2 351.8h2v2.3h-2zM1252.5 351.8h3.5v2.3h-3.5zM1257.6 351.8h2v2.3h-2zM1261.2 351.8h3v2.3h-3zM1265.8 351.8h1v2.3h-1zM1268.4 351.8h1.5v2.3h-1.5zM1270.9 351.8h1v2.3h-1zM1273.5 351.8h1.7v2.3h-1.7zM1217.5 355.6h1v2.3h-1zM1220.1 355.6h4v2.3h-4zM1225.4 355.6h3v2.3h-3zM1229.7 355.6h1.5v2.3h-1.5zM1232.2 355.6h4v2.3h-4zM1237.5 355.6h1v2.3h-1zM1239.5 355.6h1v2.3h-1zM1241.5 355.6h4v2.3h-4zM1246.5 355.6h2v2.3h-2zM1249.5 355.6h1v2.3h-1zM1252.1 355.6h3.5v2.3h-3.5zM1256.6 355.6h1.5v2.3h-1.5zM1259.4 355.6h1.5v2.3h-1.5zM1261.9 355.6h3v2.3h-3zM1266.5 355.6h1v2.3h-1zM1268.5 355.6h2v2.3h-2zM1271.5 355.6h2v2.3h-2zM1217.0 359.5h2v2.3h-2zM1220.0 359.5h1.5v2.3h-1.5zM1222.5 359.5h3v2.3h-3zM1226.5 359.5h1.5v2.3h-1.5zM1229.0 359.5h4v2.3h-4zM1234.3 359.5h4v2.3h-4zM1239.3 359.5h4v2.3h-4zM1244.3 359.5h2v2.3h-2zM1247.9 359.5h1v2.3h-1zM1250.2 359.5h1.5v2.3h-1.5zM1253.0 359.5h3v2.3h-3zM1257.6 359.5h1v2.3h-1zM1260.2 359.5h2v2.3h-2zM1263.2 359.5h4v2.3h-4zM1268.2 359.5h4v2.3h-4zM1273.2 359.5h1v2.3h-1zM1217.0 363.3h1v2.3h-1zM1219.6 363.3h1v2.3h-1zM1221.6 363.3h3v2.3h-3zM1226.2 363.3h2v2.3h-2zM1229.2 363.3h2v2.3h-2zM1232.2 363.3h2v2.3h-2zM1235.8 363.3h3.5v2.3h-3.5zM1240.9 363.3h3v2.3h-3zM1245.2 363.3h2v2.3h-2zM1248.5 363.3h1.5v2.3h-1.5zM1251.3 363.3h2v2.3h-2zM1254.3 363.3h1.5v2.3h-1.5zM1256.8 363.3h3.5v2.3h-3.5zM1261.9 363.3h4v2.3h-4zM1266.9 363.3h3v2.3h-3zM1270.9 363.3h1v2.3h-1zM1273.2 363.3h2v2.3h-2zM1217.0 367.2h3v2.3h-3zM1221.6 367.2h1v2.3h-1zM1223.9 367.2h3.5v2.3h-3.5zM1229.0 367.2h4v2.3h-4zM1234.3 367.2h2v2.3h-2zM1237.9 367.2h2v2.3h-2zM1240.9 367.2h1.5v2.3h-1.5zM1243.4 367.2h3v2.3h-3zM1247.7 367.2h3.5v2.3h-3.5zM1252.2 367.2h4v2.3h-4zM1257.8 367.2h1.5v2.3h-1.5zM1260.9 367.2h1.5v2.3h-1.5zM1263.4 367.2h2v2.3h-2zM1266.7 367.2h3v2.3h-3zM1271.0 367.2h1v2.3h-1zM1273.6 367.2h1.6v2.3h-1.6z" fill="#000" shape-rendering="auto"/>
<rect x="1269.6" y="371.6" width="6.4" height="13" fill="#404040"/>
<path d="M1271.1 373.2h2v2.3h-2zM1274.1 373.2h1.1v2.3h-1.1zM1272.1 377.1h1.5v2.3h-1.5zM1274.6 377.1h0.6v2.3h-0.6zM1272.1 380.9h3v2.3h-3z" fill="#000" shape-rendering="auto"/>
<path d="M1216 363.5H1276" fill="none" stroke="#909090" stroke-width="1"/>
<g stroke="#ff0000" stroke-width="1" stroke-dasharray="16 1 9 1 2 1 9 1" stroke-dashoffset="1.8">
<line x1="590" y1="326.4" x2="1323" y2="326.4"/>
<line x1="590" y1="362.5" x2="1323" y2="362.5"/>
<line x1="590" y1="392.5" x2="1323" y2="392.5"/>
<line x1="590" y1="419.5" x2="1323" y2="419.5"/>
<line x1="590" y1="446.3" x2="1323" y2="446.3"/>
<line x1="590" y1="472.6" x2="1323" y2="472.6"/>
<line x1="590" y1="499.2" x2="1323" y2="499.2"/>
<line x1="590" y1="526.3" x2="1323" y2="526.3"/>
<line x1="590" y1="552.5" x2="1323" y2="552.5"/>
<line x1="590" y1="579.3" x2="1323" y2="579.3"/>
<line x1="590" y1="606.1" x2="1323" y2="606.1"/>
<line x1="590" y1="632.7" x2="1323" y2="632.7"/>
<line x1="590" y1="659.5" x2="1323" y2="659.5"/>
<line x1="590" y1="686.3" x2="1323" y2="686.3"/>
<line x1="590" y1="739.6" x2="1323" y2="739.6"/>
</g>
<line x1="590" y1="712.5" x2="1323" y2="712.5" stroke="#ff0000" stroke-width="1"/>
<g stroke="#ff0000" stroke-width="1" stroke-dasharray="17.5 2.5 4.3 2.5" stroke-dashoffset="2.2">
<line x1="666.4" y1="261.6" x2="666.4" y2="808"/>
<line x1="716.6" y1="261.6" x2="716.6" y2="808"/>
<line x1="766.5" y1="261.6" x2="766.5" y2="808"/>
<line x1="816.4" y1="261.6" x2="816.4" y2="808"/>
<line x1="863.4" y1="261.6" x2="863.4" y2="808"/>
<line x1="903.3" y1="261.6" x2="903.3" y2="808"/>
<line x1="1115.5" y1="261.6" x2="1115.5" y2="808"/>
<line x1="1165.3" y1="261.6" x2="1165.3" y2="808"/>
<line x1="1215.2" y1="261.6" x2="1215.2" y2="808"/>
<line x1="1265.3" y1="261.6" x2="1265.3" y2="808"/>
</g>
<defs>
<clipPath id="c1"><path d="M662 384H909.5V558.3L896.6 552.5L883 562.3H820.5V732.5L662 751.4Z"/></clipPath>
<clipPath id="c1s"><path d="M646 354.6L662.6 385V751.8H646Z"/></clipPath>
<clipPath id="c2"><path d="M1037 384H1276V566.8L1244.7 552.5L1234.5 562.3H1189.5V732.5L1037 751.4Z"/></clipPath>
</defs>
<g id="b1">
<g clip-path="url(#c1)"><path d="M666.3 384.5V752M674.7 384.5V752M691.4 384.5V752M699.7 384.5V752M716.4 384.5V752M724.8 384.5V752M741.5 384.5V752M749.8 384.5V752M766.5 384.5V752M774.9 384.5V752M791.6 384.5V752M799.9 384.5V752M816.6 384.5V752M825.0 384.5V752M841.6 384.5V752M850.0 384.5V752M866.7 384.5V752M875.1 384.5V752M891.8 384.5V752M900.1 384.5V752M662.6 401.2H909M662.6 417.7H909M662.6 428.2H909M662.6 444.5H909M662.6 455.0H909M662.6 481.3H909M662.6 497.4H909M662.6 507.9H909M662.6 524.5H909M662.6 535.0H909M662.6 561.2H909M662.6 577.5H909M662.6 588.0H909M662.6 604.3H909M662.6 614.8H909M662.6 641.4H909M662.6 657.7H909M662.6 668.2H909M662.6 684.5H909M662.6 695.0H909M662.6 721.2H909M662.6 737.8H909M662.6 748.3H909" fill="none" stroke="#00ffff" stroke-width="1"/><path d="M683.0 384.5V752M708.0 384.5V752M733.1 384.5V752M758.1 384.5V752M783.2 384.5V752M808.2 384.5V752M833.3 384.5V752M858.4 384.5V752M883.4 384.5V752M908.5 384.5V752M662.6 390.7H909M662.6 470.8H909M662.6 550.7H909M662.6 630.9H909M662.6 710.7H909" fill="none" stroke="#00ffff" stroke-width="2"/></g>
<g clip-path="url(#c1s)"><path d="M648.8 354V752M650.5 354V752M652.2 354V752M653.8 354V752M655.3 354V752M657.2 354V752M659.7 354V752M646.4 401.2H662.6M646.4 417.7H662.6M646.4 428.2H662.6M646.4 444.5H662.6M646.4 455.0H662.6M646.4 481.3H662.6M646.4 497.4H662.6M646.4 507.9H662.6M646.4 524.5H662.6M646.4 535.0H662.6M646.4 561.2H662.6M646.4 577.5H662.6M646.4 588.0H662.6M646.4 604.3H662.6M646.4 614.8H662.6M646.4 641.4H662.6M646.4 657.7H662.6M646.4 668.2H662.6M646.4 684.5H662.6M646.4 695.0H662.6M646.4 721.2H662.6M646.4 737.8H662.6M646.4 748.3H662.6" fill="none" stroke="#00ffff" stroke-width="1"/><path d="M646.4 390.7H662.6M646.4 470.8H662.6M646.4 550.7H662.6M646.4 630.9H662.6M646.4 710.7H662.6" fill="none" stroke="#00ffff" stroke-width="2"/></g>
<path d="M646.4 751.5V354.6H677.4M646.4 354.6L662.6 384.5M646.4 751.5H663" fill="none" stroke="#909090" stroke-width="1"/>
<path d="M677.4 384.5V354.6H820" fill="none" stroke="#ffff00" stroke-width="1"/>
<path d="M820 354.6H858.9" fill="none" stroke="#ffff00" stroke-width="1" stroke-dasharray="4 2 1 2"/>
<path d="M858.9 354.6V371.4M860.6 329.3V371.4M858.9 371.4H909.7M907.4 371.4V384.5" fill="none" stroke="#ffff00" stroke-width="1"/>
<path d="M662.6 751.3V384.5H907.4" fill="none" stroke="#ffff00" stroke-width="1"/>
<path d="M909.6 384.5V552.5" fill="none" stroke="#ffff00" stroke-width="1"/>
<path d="M860.6 329.3H909.7V371.4" fill="none" stroke="#ffff00" stroke-width="1" stroke-dasharray="3 2"/>
<path d="M820.3 354V329.3H860" fill="none" stroke="#b0b0b0" stroke-width="1"/>
<path d="M861 362.5H909M909.6 371.4V384.5" fill="none" stroke="#909090" stroke-width="1"/>
<line x1="677.4" y1="361" x2="858.9" y2="361" stroke="#00ffff" stroke-width="2"/>
<line x1="677.4" y1="371.4" x2="858.9" y2="371.4" stroke="#00ffff" stroke-width="1"/>
<path d="M820.5 561.5V732.5M663.1 751.3L820.5 732.5" fill="none" stroke="#ffff00" stroke-width="1"/>
<path d="M831.5 561.5V712.6H842.5V732.5H909.6L929.8 722V566L896.6 552.5L847.7 579.5H844.7V561.5M896.6 552.5V719L929.8 722M896.6 719L848.2 732.5M896.6 552.5L908.5 558" fill="none" stroke="#ffff00" stroke-width="1"/>
<path d="M821 579.3H831.5M821 581.3H831.5M821 606.1H831.5M821 608.1H831.5M821 632.7H831.5M821 634.7H831.5M821 659.5H831.5M821 661.5H831.5M821 686.3H831.5M821 688.3H831.5M821 712.5H831.5M821 714.5H831.5M821 714.4H842.5M842.5 732.5V772.5M847.5 732.5V772.5M909.6 732.5V772.5" fill="none" stroke="#909090" stroke-width="1"/>
<path d="M860.2 561.5V571.5M865.4 561.5V569" fill="none" stroke="#ffffff" stroke-width="1"/>
<path d="M650.3 751.5V772.5M655.5 751.5V772.5M663.4 751.3V772.5M669.5 750.5V772.5M713.5 745.3V772.5M719.4 744.6V772.5M763.6 739.3V772.5M768.3 738.7V772.5M769.3 738.6V772.5M814.6 733.2V772.5M818.5 732.7V772.5" fill="none" stroke="#ffffff" stroke-width="1"/>
<path d="M691.6 748.4H713.5M719.4 748.4H763.6" fill="none" stroke="#909090" stroke-width="1"/>
</g>
<g id="b2">
<g clip-path="url(#c2)"><path d="M1040.6 384.5V752M1048.7 384.5V752M1056.8 384.5V752M1064.9 384.5V752M1073.0 384.5V752M1081.1 384.5V752M1089.2 384.5V752M1097.3 384.5V752M1105.4 384.5V752M1113.5 384.5V752M1121.6 384.5V752M1129.7 384.5V752M1137.8 384.5V752M1145.9 384.5V752M1154.0 384.5V752M1162.1 384.5V752M1170.2 384.5V752M1178.3 384.5V752M1186.4 384.5V752M1194.5 384.5V752M1202.6 384.5V752M1210.7 384.5V752M1218.8 384.5V752M1226.9 384.5V752M1235.0 384.5V752M1243.1 384.5V752M1251.2 384.5V752M1259.3 384.5V752M1267.4 384.5V752M1274.2 384.5V752M1037.6 401.2H1276M1037.6 417.7H1276M1037.6 428.2H1276M1037.6 444.5H1276M1037.6 455.0H1276M1037.6 481.3H1276M1037.6 497.4H1276M1037.6 507.9H1276M1037.6 524.5H1276M1037.6 535.0H1276M1037.6 561.2H1276M1037.6 577.5H1276M1037.6 588.0H1276M1037.6 604.3H1276M1037.6 614.8H1276M1037.6 641.4H1276M1037.6 657.7H1276M1037.6 668.2H1276M1037.6 684.5H1276M1037.6 695.0H1276M1037.6 721.2H1276M1037.6 737.8H1276M1037.6 748.3H1276" fill="none" stroke="#00ffff" stroke-width="1"/><path d="M1037.6 390.7H1276M1037.6 470.8H1276M1037.6 550.7H1276M1037.6 630.9H1276M1037.6 710.7H1276" fill="none" stroke="#00ffff" stroke-width="2"/></g>
<path d="M1037.6 384.5V354.6H1053.4" fill="none" stroke="#909090" stroke-width="1"/>
<path d="M1053.4 384.5V354.6H1216" fill="none" stroke="#ffff00" stroke-width="1"/>
<path d="M1037.6 751.3V384.5H1275.5V552.5M1275.5 566.5V722" fill="none" stroke="#ffff00" stroke-width="1"/>
<path d="M1216 327H1275.8V371.6H1216Z" fill="none" stroke="#ffff00" stroke-width="1" stroke-dasharray="3 2"/>
<path d="M1269.6 371.6V384.5" fill="none" stroke="#ffff00" stroke-width="1"/>
<path d="M1037.6 751.3L1189.5 732.5V561.5" fill="none" stroke="#ffff00" stroke-width="1"/>
<path d="M1195.4 561.5V712.6M1206.6 561.5V712.6M1189.5 712.6H1213V772.5M1192 712.6V772.5M1200 712.6V772.5M1206 712.6V772.5M1215.2 579.3L1244.7 552.5M1215 731.9L1244.7 719.2M1215 731.9H1275.5M1215 731.9V772.5M1275.5 722V772.5M1227 731.9V772.5M1239 731.9V772.5M1251 731.9V772.5" fill="none" stroke="#909090" stroke-width="1"/>
<path d="M1195.4 577.5H1206.6M1195.4 588H1206.6M1195.4 604.3H1206.6M1195.4 614.8H1206.6M1195.4 630.9H1206.6M1195.4 641.4H1206.6M1195.4 657.7H1206.6M1195.4 668.2H1206.6M1195.4 684.5H1206.6M1195.4 695H1206.6M1195.4 710.7H1206.6M1195.4 721.2H1206.6" fill="none" stroke="#00ffff" stroke-width="1"/>
<line x1="1195.4" y1="632.7" x2="1206.6" y2="632.7" stroke="#00ffff" stroke-width="2"/>
<path d="M1244.7 552.5L1275.5 566.5M1275.5 722L1244.7 719.2V552.5" fill="none" stroke="#ffff00" stroke-width="1"/>
<path d="M1247.6 721.2L1269.8 723L1264.8 771.8H1253.7Z M1250 722L1256 771.8M1267.5 723.5L1262.5 771.8" fill="none" stroke="#ffffff" stroke-width="1"/>
<path d="M1226 561.5V570M1231 561.5V565M1268 562V567M1271.5 562V566" fill="none" stroke="#ffffff" stroke-width="1"/>
<path d="M1038.5 751.2V772.5M1042 750.8V772.5M1044.5 750.4V772.5M1086.5 745.2V772.5M1089 744.9V772.5M1092.5 744.5V772.5M1136 739.1V772.5M1140.5 738.6V772.5M1186.5 732.9V772.5" fill="none" stroke="#ffffff" stroke-width="1"/>
<path d="M1098 746.8V772.5M1104 746.1V772.5M1110 745.3V772.5M1116 744.6V772.5M1122 743.9V772.5M1128 743.1V772.5M1142 741.4V772.5M1154 739.9V772.5M1166 738.4V772.5M1178 736.9V772.5M1044.5 749.5H1086.5M1092.5 744.3H1136" fill="none" stroke="#909090" stroke-width="1"/>
</g>
<line x1="590" y1="772.5" x2="1323" y2="772.5" stroke="#ffff00" stroke-width="1"/>
<g font-family="Liberation Sans, sans-serif">
<circle cx="666.4" cy="216.8" r="7.2" fill="none" stroke="#ff00ff" stroke-width="1.1" shape-rendering="auto"/>
<line x1="666.4" y1="224" x2="666.4" y2="229" stroke="#ff00ff" stroke-width="1"/>
<text x="666.4" y="220.5" text-anchor="middle" font-size="10.5" font-weight="bold" fill="#00ff00" shape-rendering="auto">F</text>
<circle cx="716.6" cy="216.8" r="7.2" fill="none" stroke="#ff00ff" stroke-width="1.1" shape-rendering="auto"/>
<line x1="716.6" y1="224" x2="716.6" y2="229" stroke="#ff00ff" stroke-width="1"/>
<text x="716.6" y="220.5" text-anchor="middle" font-size="10.5" font-weight="bold" fill="#00ff00" shape-rendering="auto">E</text>
<circle cx="766.5" cy="216.8" r="7.2" fill="none" stroke="#ff00ff" stroke-width="1.1" shape-rendering="auto"/>
<line x1="766.5" y1="224" x2="766.5" y2="229" stroke="#ff00ff" stroke-width="1"/>
<text x="766.5" y="220.5" text-anchor="middle" font-size="10.5" font-weight="bold" fill="#00ff00" shape-rendering="auto">D</text>
<circle cx="816.4" cy="216.8" r="7.2" fill="none" stroke="#ff00ff" stroke-width="1.1" shape-rendering="auto"/>
<line x1="816.4" y1="224" x2="816.4" y2="229" stroke="#ff00ff" stroke-width="1"/>
<text x="816.4" y="220.5" text-anchor="middle" font-size="10.5" font-weight="bold" fill="#00ff00" shape-rendering="auto">C</text>
<circle cx="863.4" cy="216.8" r="7.2" fill="none" stroke="#ff00ff" stroke-width="1.1" shape-rendering="auto"/>
<line x1="863.4" y1="224" x2="863.4" y2="229" stroke="#ff00ff" stroke-width="1"/>
<text x="863.4" y="220.5" text-anchor="middle" font-size="10.5" font-weight="bold" fill="#00ff00" shape-rendering="auto">B</text>
<circle cx="903.3" cy="216.8" r="7.2" fill="none" stroke="#ff00ff" stroke-width="1.1" shape-rendering="auto"/>
<line x1="903.3" y1="224" x2="903.3" y2="229" stroke="#ff00ff" stroke-width="1"/>
<text x="903.3" y="220.5" text-anchor="middle" font-size="10.5" font-weight="bold" fill="#00ff00" shape-rendering="auto">A</text>
<path d="M666.4 236H903.3M666.4 248.8H903.3M666.4 234V260M716.6 247V260M766.5 247V260M816.4 247V260M863.4 247V260M903.3 234V260" fill="none" stroke="#ffffff" stroke-width="1"/>
<rect x="778" y="231" width="12" height="5" fill="#00ff00"/>
<rect x="686" y="242.6" width="10" height="5.4" fill="#00ff00"/>
<rect x="736" y="242.6" width="10" height="5.4" fill="#00ff00"/>
<rect x="785.5" y="242.6" width="10.5" height="5.4" fill="#00ff00"/>
<rect x="834" y="242.6" width="10" height="5.4" fill="#00ff00"/>
<rect x="878" y="242.6" width="10" height="5.4" fill="#00ff00"/>
<circle cx="1115.5" cy="216.8" r="7.2" fill="none" stroke="#ff00ff" stroke-width="1.1" shape-rendering="auto"/>
<line x1="1115.5" y1="224" x2="1115.5" y2="229" stroke="#ff00ff" stroke-width="1"/>
<text x="1115.5" y="220.5" text-anchor="middle" font-size="10.5" font-weight="bold" fill="#00ff00" shape-rendering="auto">Y4</text>
<circle cx="1165.3" cy="216.8" r="7.2" fill="none" stroke="#ff00ff" stroke-width="1.1" shape-rendering="auto"/>
<line x1="1165.3" y1="224" x2="1165.3" y2="229" stroke="#ff00ff" stroke-width="1"/>
<text x="1165.3" y="220.5" text-anchor="middle" font-size="10.5" font-weight="bold" fill="#00ff00" shape-rendering="auto">Y3</text>
<circle cx="1215.2" cy="216.8" r="7.2" fill="none" stroke="#ff00ff" stroke-width="1.1" shape-rendering="auto"/>
<line x1="1215.2" y1="224" x2="1215.2" y2="229" stroke="#ff00ff" stroke-width="1"/>
<text x="1215.2" y="220.5" text-anchor="middle" font-size="10.5" font-weight="bold" fill="#00ff00" shape-rendering="auto">Y2</text>
<circle cx="1265.3" cy="216.8" r="7.2" fill="none" stroke="#ff00ff" stroke-width="1.1" shape-rendering="auto"/>
<line x1="1265.3" y1="224" x2="1265.3" y2="229" stroke="#ff00ff" stroke-width="1"/>
<text x="1265.3" y="220.5" text-anchor="middle" font-size="10.5" font-weight="bold" fill="#00ff00" shape-rendering="auto">Y1</text>
<path d="M1115.5 236H1265.3M1115.5 248.8H1265.3M1115.5 234V260M1165.3 247V260M1215.2 247V260M1265.3 234V260" fill="none" stroke="#ffffff" stroke-width="1"/>
<rect x="1184" y="231" width="12" height="5" fill="#00ff00"/>
<rect x="1135" y="242.6" width="10" height="5.4" fill="#00ff00"/>
<rect x="1185" y="242.6" width="10" height="5.4" fill="#00ff00"/>
<rect x="1235" y="242.6" width="10" height="5.4" fill="#00ff00"/>
</g>
<g font-family="Liberation Sans, sans-serif" font-size="6.2" font-weight="bold" fill="#00ff00" stroke="#00ff00" stroke-width=".45">
<line x1="506" y1="326.4" x2="553" y2="326.4" stroke="#ff00ff" stroke-width="1"/>
<line x1="512.4" y1="320.4" x2="512.4" y2="332.4" stroke="#ff00ff" stroke-width="1"/>
<circle cx="512.4" cy="326.4" r="3.2" fill="none" stroke="#ff00ff" stroke-width="1.1" shape-rendering="auto"/>
<path d="M512.4 326.4m-3.2 0a3.2 3.2 0 0 1 3.2 -3.2v3.2zM512.4 326.4h3.2a3.2 3.2 0 0 1 -3.2 3.2z" fill="#ff00ff" shape-rendering="auto"/>
<text x="519" y="325.6" shape-rendering="auto" textLength="14.5" lengthAdjust="spacingAndGlyphs">RF FL</text>
<text x="519" y="333" shape-rendering="auto" textLength="24" lengthAdjust="spacingAndGlyphs">EL+79.00</text>
<line x1="506" y1="362.5" x2="553" y2="362.5" stroke="#ff00ff" stroke-width="1"/>
<line x1="512.4" y1="356.5" x2="512.4" y2="368.5" stroke="#ff00ff" stroke-width="1"/>
<circle cx="512.4" cy="362.5" r="3.2" fill="none" stroke="#ff00ff" stroke-width="1.1" shape-rendering="auto"/>
<path d="M512.4 362.5m-3.2 0a3.2 3.2 0 0 1 3.2 -3.2v3.2zM512.4 362.5h3.2a3.2 3.2 0 0 1 -3.2 3.2z" fill="#ff00ff" shape-rendering="auto"/>
<text x="519" y="361.7" shape-rendering="auto" textLength="14" lengthAdjust="spacingAndGlyphs">PH2F FL</text>
<text x="519" y="369.1" shape-rendering="auto" textLength="24" lengthAdjust="spacingAndGlyphs">EL+73.00</text>
<line x1="506" y1="392.5" x2="553" y2="392.5" stroke="#ff00ff" stroke-width="1"/>
<line x1="512.4" y1="386.5" x2="512.4" y2="398.5" stroke="#ff00ff" stroke-width="1"/>
<circle cx="512.4" cy="392.5" r="3.2" fill="none" stroke="#ff00ff" stroke-width="1.1" shape-rendering="auto"/>
<path d="M512.4 392.5m-3.2 0a3.2 3.2 0 0 1 3.2 -3.2v3.2zM512.4 392.5h3.2a3.2 3.2 0 0 1 -3.2 3.2z" fill="#ff00ff" shape-rendering="auto"/>
<text x="519" y="391.7" shape-rendering="auto" textLength="14" lengthAdjust="spacingAndGlyphs">16F FL</text>
<text x="519" y="399.1" shape-rendering="auto" textLength="24" lengthAdjust="spacingAndGlyphs">EL+68.80</text>
<line x1="506" y1="419.5" x2="553" y2="419.5" stroke="#ff00ff" stroke-width="1"/>
<line x1="512.4" y1="413.5" x2="512.4" y2="425.5" stroke="#ff00ff" stroke-width="1"/>
<circle cx="512.4" cy="419.5" r="3.2" fill="none" stroke="#ff00ff" stroke-width="1.1" shape-rendering="auto"/>
<path d="M512.4 419.5m-3.2 0a3.2 3.2 0 0 1 3.2 -3.2v3.2zM512.4 419.5h3.2a3.2 3.2 0 0 1 -3.2 3.2z" fill="#ff00ff" shape-rendering="auto"/>
<text x="519" y="418.7" shape-rendering="auto" textLength="14" lengthAdjust="spacingAndGlyphs">15F FL</text>
<text x="519" y="426.1" shape-rendering="auto" textLength="24" lengthAdjust="spacingAndGlyphs">EL+65.00</text>
<line x1="506" y1="446.3" x2="553" y2="446.3" stroke="#ff00ff" stroke-width="1"/>
<line x1="512.4" y1="440.3" x2="512.4" y2="452.3" stroke="#ff00ff" stroke-width="1"/>
<circle cx="512.4" cy="446.3" r="3.2" fill="none" stroke="#ff00ff" stroke-width="1.1" shape-rendering="auto"/>
<path d="M512.4 446.3m-3.2 0a3.2 3.2 0 0 1 3.2 -3.2v3.2zM512.4 446.3h3.2a3.2 3.2 0 0 1 -3.2 3.2z" fill="#ff00ff" shape-rendering="auto"/>
<text x="519" y="445.5" shape-rendering="auto" textLength="14" lengthAdjust="spacingAndGlyphs">14F FL</text>
<text x="519" y="452.9" shape-rendering="auto" textLength="24" lengthAdjust="spacingAndGlyphs">EL+61.00</text>
<line x1="506" y1="472.6" x2="553" y2="472.6" stroke="#ff00ff" stroke-width="1"/>
<line x1="512.4" y1="466.6" x2="512.4" y2="478.6" stroke="#ff00ff" stroke-width="1"/>
<circle cx="512.4" cy="472.6" r="3.2" fill="none" stroke="#ff00ff" stroke-width="1.1" shape-rendering="auto"/>
<path d="M512.4 472.6m-3.2 0a3.2 3.2 0 0 1 3.2 -3.2v3.2zM512.4 472.6h3.2a3.2 3.2 0 0 1 -3.2 3.2z" fill="#ff00ff" shape-rendering="auto"/>
<text x="519" y="471.8" shape-rendering="auto" textLength="14" lengthAdjust="spacingAndGlyphs">12F FL</text>
<text x="519" y="479.2" shape-rendering="auto" textLength="24" lengthAdjust="spacingAndGlyphs">EL+57.00</text>
<line x1="506" y1="499.2" x2="553" y2="499.2" stroke="#ff00ff" stroke-width="1"/>
<line x1="512.4" y1="493.2" x2="512.4" y2="505.2" stroke="#ff00ff" stroke-width="1"/>
<circle cx="512.4" cy="499.2" r="3.2" fill="none" stroke="#ff00ff" stroke-width="1.1" shape-rendering="auto"/>
<path d="M512.4 499.2m-3.2 0a3.2 3.2 0 0 1 3.2 -3.2v3.2zM512.4 499.2h3.2a3.2 3.2 0 0 1 -3.2 3.2z" fill="#ff00ff" shape-rendering="auto"/>
<text x="519" y="498.4" shape-rendering="auto" textLength="14" lengthAdjust="spacingAndGlyphs">11F FL</text>
<text x="519" y="505.8" shape-rendering="auto" textLength="24" lengthAdjust="spacingAndGlyphs">EL+53.00</text>
<line x1="506" y1="526.3" x2="553" y2="526.3" stroke="#ff00ff" stroke-width="1"/>
<line x1="512.4" y1="520.3" x2="512.4" y2="532.3" stroke="#ff00ff" stroke-width="1"/>
<circle cx="512.4" cy="526.3" r="3.2" fill="none" stroke="#ff00ff" stroke-width="1.1" shape-rendering="auto"/>
<path d="M512.4 526.3m-3.2 0a3.2 3.2 0 0 1 3.2 -3.2v3.2zM512.4 526.3h3.2a3.2 3.2 0 0 1 -3.2 3.2z" fill="#ff00ff" shape-rendering="auto"/>
<text x="519" y="525.5" shape-rendering="auto" textLength="14" lengthAdjust="spacingAndGlyphs">10F FL</text>
<text x="519" y="532.9" shape-rendering="auto" textLength="24" lengthAdjust="spacingAndGlyphs">EL+49.00</text>
<line x1="506" y1="552.5" x2="553" y2="552.5" stroke="#ff00ff" stroke-width="1"/>
<line x1="512.4" y1="546.5" x2="512.4" y2="558.5" stroke="#ff00ff" stroke-width="1"/>
<circle cx="512.4" cy="552.5" r="3.2" fill="none" stroke="#ff00ff" stroke-width="1.1" shape-rendering="auto"/>
<path d="M512.4 552.5m-3.2 0a3.2 3.2 0 0 1 3.2 -3.2v3.2zM512.4 552.5h3.2a3.2 3.2 0 0 1 -3.2 3.2z" fill="#ff00ff" shape-rendering="auto"/>
<text x="519" y="551.7" shape-rendering="auto" textLength="14" lengthAdjust="spacingAndGlyphs">9F FL</text>
<text x="519" y="559.1" shape-rendering="auto" textLength="24" lengthAdjust="spacingAndGlyphs">EL+44.80</text>
<line x1="506" y1="579.3" x2="553" y2="579.3" stroke="#ff00ff" stroke-width="1"/>
<line x1="512.4" y1="573.3" x2="512.4" y2="585.3" stroke="#ff00ff" stroke-width="1"/>
<circle cx="512.4" cy="579.3" r="3.2" fill="none" stroke="#ff00ff" stroke-width="1.1" shape-rendering="auto"/>
<path d="M512.4 579.3m-3.2 0a3.2 3.2 0 0 1 3.2 -3.2v3.2zM512.4 579.3h3.2a3.2 3.2 0 0 1 -3.2 3.2z" fill="#ff00ff" shape-rendering="auto"/>
<text x="519" y="578.5" shape-rendering="auto" textLength="14" lengthAdjust="spacingAndGlyphs">8F FL</text>
<text x="519" y="585.9" shape-rendering="auto" textLength="24" lengthAdjust="spacingAndGlyphs">EL+41.00</text>
<line x1="506" y1="606.1" x2="553" y2="606.1" stroke="#ff00ff" stroke-width="1"/>
<line x1="512.4" y1="600.1" x2="512.4" y2="612.1" stroke="#ff00ff" stroke-width="1"/>
<circle cx="512.4" cy="606.1" r="3.2" fill="none" stroke="#ff00ff" stroke-width="1.1" shape-rendering="auto"/>
<path d="M512.4 606.1m-3.2 0a3.2 3.2 0 0 1 3.2 -3.2v3.2zM512.4 606.1h3.2a3.2 3.2 0 0 1 -3.2 3.2z" fill="#ff00ff" shape-rendering="auto"/>
<text x="519" y="605.3" shape-rendering="auto" textLength="14" lengthAdjust="spacingAndGlyphs">7F FL</text>
<text x="519" y="612.7" shape-rendering="auto" textLength="24" lengthAdjust="spacingAndGlyphs">EL+37.00</text>
<line x1="506" y1="632.7" x2="553" y2="632.7" stroke="#ff00ff" stroke-width="1"/>
<line x1="512.4" y1="626.7" x2="512.4" y2="638.7" stroke="#ff00ff" stroke-width="1"/>
<circle cx="512.4" cy="632.7" r="3.2" fill="none" stroke="#ff00ff" stroke-width="1.1" shape-rendering="auto"/>
<path d="M512.4 632.7m-3.2 0a3.2 3.2 0 0 1 3.2 -3.2v3.2zM512.4 632.7h3.2a3.2 3.2 0 0 1 -3.2 3.2z" fill="#ff00ff" shape-rendering="auto"/>
<text x="519" y="631.9" shape-rendering="auto" textLength="14" lengthAdjust="spacingAndGlyphs">6F FL</text>
<text x="519" y="639.3" shape-rendering="auto" textLength="24" lengthAdjust="spacingAndGlyphs">EL+33.00</text>
<line x1="506" y1="659.5" x2="553" y2="659.5" stroke="#ff00ff" stroke-width="1"/>
<line x1="512.4" y1="653.5" x2="512.4" y2="665.5" stroke="#ff00ff" stroke-width="1"/>
<circle cx="512.4" cy="659.5" r="3.2" fill="none" stroke="#ff00ff" stroke-width="1.1" shape-rendering="auto"/>
<path d="M512.4 659.5m-3.2 0a3.2 3.2 0 0 1 3.2 -3.2v3.2zM512.4 659.5h3.2a3.2 3.2 0 0 1 -3.2 3.2z" fill="#ff00ff" shape-rendering="auto"/>
<text x="519" y="658.7" shape-rendering="auto" textLength="14" lengthAdjust="spacingAndGlyphs">5F FL</text>
<text x="519" y="666.1" shape-rendering="auto" textLength="24" lengthAdjust="spacingAndGlyphs">EL+29.00</text>
<line x1="506" y1="686.3" x2="553" y2="686.3" stroke="#ff00ff" stroke-width="1"/>
<line x1="512.4" y1="680.3" x2="512.4" y2="692.3" stroke="#ff00ff" stroke-width="1"/>
<circle cx="512.4" cy="686.3" r="3.2" fill="none" stroke="#ff00ff" stroke-width="1.1" shape-rendering="auto"/>
<path d="M512.4 686.3m-3.2 0a3.2 3.2 0 0 1 3.2 -3.2v3.2zM512.4 686.3h3.2a3.2 3.2 0 0 1 -3.2 3.2z" fill="#ff00ff" shape-rendering="auto"/>
<text x="519" y="685.5" shape-rendering="auto" textLength="14" lengthAdjust="spacingAndGlyphs">4F FL</text>
<text x="519" y="692.9" shape-rendering="auto" textLength="24" lengthAdjust="spacingAndGlyphs">EL+25.00</text>
<line x1="506" y1="712.5" x2="553" y2="712.5" stroke="#ff00ff" stroke-width="1"/>
<line x1="512.4" y1="706.5" x2="512.4" y2="718.5" stroke="#ff00ff" stroke-width="1"/>
<circle cx="512.4" cy="712.5" r="3.2" fill="none" stroke="#ff00ff" stroke-width="1.1" shape-rendering="auto"/>
<path d="M512.4 712.5m-3.2 0a3.2 3.2 0 0 1 3.2 -3.2v3.2zM512.4 712.5h3.2a3.2 3.2 0 0 1 -3.2 3.2z" fill="#ff00ff" shape-rendering="auto"/>
<text x="519" y="711.7" shape-rendering="auto" textLength="14" lengthAdjust="spacingAndGlyphs">3F FL</text>
<text x="519" y="719.1" shape-rendering="auto" textLength="24" lengthAdjust="spacingAndGlyphs">EL+21.00</text>
<line x1="506" y1="739.6" x2="553" y2="739.6" stroke="#ff00ff" stroke-width="1"/>
<line x1="512.4" y1="733.6" x2="512.4" y2="745.6" stroke="#ff00ff" stroke-width="1"/>
<circle cx="512.4" cy="739.6" r="3.2" fill="none" stroke="#ff00ff" stroke-width="1.1" shape-rendering="auto"/>
<path d="M512.4 739.6m-3.2 0a3.2 3.2 0 0 1 3.2 -3.2v3.2zM512.4 739.6h3.2a3.2 3.2 0 0 1 -3.2 3.2z" fill="#ff00ff" shape-rendering="auto"/>
<text x="519" y="738.8" shape-rendering="auto" textLength="14" lengthAdjust="spacingAndGlyphs">2F FL</text>
<text x="519" y="746.2" shape-rendering="auto" textLength="24" lengthAdjust="spacingAndGlyphs">EL+17.00</text>
<line x1="506" y1="772.5" x2="553" y2="772.5" stroke="#ff00ff" stroke-width="1"/>
<line x1="512.4" y1="766.5" x2="512.4" y2="778.5" stroke="#ff00ff" stroke-width="1"/>
<circle cx="512.4" cy="772.5" r="3.2" fill="none" stroke="#ff00ff" stroke-width="1.1" shape-rendering="auto"/>
<path d="M512.4 772.5m-3.2 0a3.2 3.2 0 0 1 3.2 -3.2v3.2zM512.4 772.5h3.2a3.2 3.2 0 0 1 -3.2 3.2z" fill="#ff00ff" shape-rendering="auto"/>
<text x="519" y="771.7" shape-rendering="auto" textLength="14" lengthAdjust="spacingAndGlyphs">1F FL</text>
<text x="519" y="779.1" shape-rendering="auto" textLength="24" lengthAdjust="spacingAndGlyphs">EL+12.00</text>
</g>
<path d="M564.9 324V772.5M576.4 324V772.5M562 326.4H588M562 772.5H588M574 362.5H588M574 392.5H588M574 419.5H588M574 446.3H588M574 472.6H588M574 499.2H588M574 526.3H588M574 552.5H588M574 579.3H588M574 606.1H588M574 632.7H588M574 659.5H588M574 686.3H588M574 712.5H588M574 739.6H588" fill="none" stroke="#ffffff" stroke-width="1"/>
<rect x="570.2" y="339.4" width="5" height="10" fill="#00ff00"/>
<rect x="570.2" y="372.5" width="5" height="10" fill="#00ff00"/>
<rect x="570.2" y="401.0" width="5" height="10" fill="#00ff00"/>
<rect x="570.2" y="427.9" width="5" height="10" fill="#00ff00"/>
<rect x="570.2" y="454.5" width="5" height="10" fill="#00ff00"/>
<rect x="570.2" y="480.9" width="5" height="10" fill="#00ff00"/>
<rect x="570.2" y="507.8" width="5" height="10" fill="#00ff00"/>
<rect x="570.2" y="534.4" width="5" height="10" fill="#00ff00"/>
<rect x="570.2" y="560.9" width="5" height="10" fill="#00ff00"/>
<rect x="570.2" y="587.7" width="5" height="10" fill="#00ff00"/>
<rect x="570.2" y="614.4" width="5" height="10" fill="#00ff00"/>
<rect x="570.2" y="641.1" width="5" height="10" fill="#00ff00"/>
<rect x="570.2" y="667.9" width="5" height="10" fill="#00ff00"/>
<rect x="570.2" y="694.4" width="5" height="10" fill="#00ff00"/>
<rect x="570.2" y="721.0" width="5" height="10" fill="#00ff00"/>
<rect x="570.2" y="751.0" width="5" height="10" fill="#00ff00"/>
<rect x="558" y="544" width="5" height="11.5" fill="#00ff00"/>
<g font-family="Liberation Sans, sans-serif" shape-rendering="auto">
<text x="754" y="834.5" font-size="15.5" font-weight="bold" fill="#00ffff">A</text>
<text x="769" y="829" font-size="12.5" fill="#00ffff" textLength="54" lengthAdjust="spacingAndGlyphs">입면도-1</text>
<line x1="769" y1="831.5" x2="824" y2="831.5" stroke="#00ffff" stroke-width="1"/>
<text x="771" y="838" font-size="6.5" fill="#00ffff" textLength="40" lengthAdjust="spacingAndGlyphs">축척: 1/200</text>
<text x="1135" y="834.5" font-size="15.5" font-weight="bold" fill="#00ffff">A</text>
<text x="1150" y="829" font-size="12.5" fill="#00ffff" textLength="54" lengthAdjust="spacingAndGlyphs">입면도-2</text>
<line x1="1150" y1="831.5" x2="1205" y2="831.5" stroke="#00ffff" stroke-width="1"/>
<text x="1152" y="838" font-size="6.5" fill="#00ffff" textLength="40" lengthAdjust="spacingAndGlyphs">축척: 1/200</text>
</g>
<line x1="597.5" y1="102" x2="597.5" y2="902" stroke="#ffffff" stroke-width="1"/>
<line x1="307" y1="429.5" x2="1639" y2="429.5" stroke="#ffffff" stroke-width="1"/>
<rect x="594" y="426" width="7" height="7" fill="none" stroke="#fff" stroke-width="1"/>
<g fill="none" stroke="#fff" stroke-width="1" shape-rendering="auto">
<rect x="322.5" y="868.5" width="15" height="14"/>
<path d="M338 875.5H407M407 869.5L425.5 875.5L407 881.5ZM407 875.5H425"/>
<path d="M329.5 868V800M322.5 800L329.5 781L336.5 800ZM329.5 800V781"/>
<path d="M442.5 866L456.5 886M456.5 866L442.5 886"/>
<path d="M324 746L331.5 756L339 746M331.5 756V766.5"/>
</g>
</svg>
<div class="a" style="left:320px;top:102px;width:21px;height:608px;background:#6d9fd8;border-right:1px solid #4a4a52;border-bottom:1px solid #4a4a52;border-left:1px solid #d9d2c4;box-sizing:border-box"></div>
<svg class="ic" style="left:324px;top:104px" width="12" height="12"><path d="M2.500 2.500l7 7M9.500 2.500l-7 7" stroke="#fff" stroke-width="2.200"/></svg>
<svg class="ic" style="left:322px;top:120px" width="17" height="16" viewBox="0 0 17 16"><path d="M0 3l7-3 10 6v8l-10 2-7-4z" fill="#e9ebee"/><path d="M0 3l7-3 10 6M0 7l10 4M0 10l9 4" fill="none" stroke="#aeb3bd" stroke-width=".8"/><ellipse cx="12" cy="9" rx="3" ry="3.500" fill="#f4f5f7" stroke="#9ea3b0" stroke-width=".8"/><path d="M8 16l9-5v5z" fill="#4a8fae"/></svg>
<div class="a" style="left:246.500px;top:600.500px;width:165px;height:16px;line-height:16px;color:#fff;font-weight:bold;font-size:13px;letter-spacing:1px;transform:rotate(-90deg);transform-origin:50% 50%;text-align:center">시트 세트 관리자</div>
<div class="a" style="left:325px;top:675px;width:10px;height:9px;box-sizing:border-box;border:1px solid #fff"><i style="position:absolute;left:2px;top:2px;width:0;height:0;border:2px solid transparent;border-left:3px solid #fff;border-right:none"></i></div>
<div class="a" style="left:325px;top:692px;width:10px;height:10px;box-sizing:border-box;border:1px solid #fff"><i style="position:absolute;left:2px;top:2px;width:4px;height:1px;background:#fff;box-shadow:0 2px 0 #fff"></i></div>
<div class="a" style="left:1639px;top:102px;width:28px;height:890px;background:#eae9ef"></div>
<div class="a" style="left:1639px;top:102px;width:2px;height:800px;background:#fff"></div>
<div class="a" style="left:1642px;top:102px;width:25px;height:392px;background:linear-gradient(90deg,#f1f1f5,#e4e3ea)"></div>
<div class="a" style="left:1642px;top:496px;width:25px;height:100px;background:linear-gradient(90deg,#f1f1f5,#e4e3ea);border-top:1px solid #c2c1cb"></div>
<div class="a" style="left:1644px;top:104px;width:21px;height:2px;border-top:1px solid #fff;border-bottom:1px solid #a9a8b3;box-sizing:border-box"></div>
<div class="a" style="left:1644px;top:107px;width:21px;height:2px;border-top:1px solid #fff;border-bottom:1px solid #a9a8b3;box-sizing:border-box"></div>
<div class="a" style="left:1644px;top:497px;width:21px;height:2px;border-top:1px solid #fff;border-bottom:1px solid #a9a8b3;box-sizing:border-box"></div>
<div class="a" style="left:1644px;top:500px;width:21px;height:2px;border-top:1px solid #fff;border-bottom:1px solid #a9a8b3;box-sizing:border-box"></div>
<svg class="ic" style="left:1646px;top:113px" width="16" height="16" viewBox="0 0 16 16"><path d="M14 1.500l-8.500 8.500" stroke="#e8c020" stroke-width="3.200"/><path d="M14.800 .7l-1.500 1.500" stroke="#c89818" stroke-width="3.200"/><path d="M6 9.500l-2.500 2.500" stroke="#e88090" stroke-width="3.200"/><path d="M6.800 8.700l-1.300 1.300" stroke="#9ab0c8" stroke-width="3.200"/><path d="M1 14.500h13" stroke="#111" stroke-width="1.300"/></svg>
<svg class="ic" style="left:1646px;top:136px" width="16" height="16" viewBox="0 0 16 16"><circle cx="4.500" cy="5" r="3.200" fill="none" stroke="#111" stroke-width="1.400"/><circle cx="10" cy="11" r="3.600" fill="#dfe9f7" stroke="#111" stroke-width="1.400"/><circle cx="6.500" cy="9.500" r="2.600" fill="#dfe9f7" stroke="#5a6a88" stroke-width="1.100"/><path d="M6 2c3-2 6-1 7.500 2" fill="none" stroke="#111" stroke-width="1.300"/><path d="M15 2l-.5 4-3.500-2z" fill="#111"/></svg>
<svg class="ic" style="left:1646px;top:158px" width="16" height="16" viewBox="0 0 16 16"><path d="M6.500 2.500v11h-5.500z" fill="#fff" stroke="#111" stroke-width="1.200"/><path d="M10 2.500v11h5.500z" fill="#dfe9f7" stroke="#111" stroke-width="1.200"/><path d="M8.200 .5v15" stroke="#2a63c0" stroke-width="1.200"/></svg>
<svg class="ic" style="left:1646px;top:180px" width="16" height="16" viewBox="0 0 16 16"><path d="M2.500 12.500v-3.500h4v-3.500c0-4 6.500-4 6.500 0v7z" fill="#dfe9f7" stroke="#1d3f85" stroke-width="1.500"/><path d="M1 15.300h14" stroke="#2a63c0" stroke-width="1.300"/></svg>
<svg class="ic" style="left:1646px;top:202px" width="16" height="16" viewBox="0 0 16 16"><g fill="#fff" stroke="#111" stroke-width="1.300"><rect x="1.500" y="1.500" width="5" height="5"/><rect x="9.500" y="1.500" width="5" height="5"/><rect x="1.500" y="9.500" width="5" height="5"/><rect x="9.500" y="9.500" width="5" height="5"/></g></svg>
<svg class="ic" style="left:1646px;top:224px" width="16" height="16" viewBox="0 0 16 16"><path d="M8 2v12M2 8h12" stroke="#2f5f9f" stroke-width="2"/><path d="M8 0l-3.200 4h6.400zM8 16l-3.200-4h6.400zM0 8l4-3.200v6.400zM16 8l-4-3.200v6.400z" fill="#2f5f9f"/></svg>
<svg class="ic" style="left:1646px;top:246px" width="16" height="16" viewBox="0 0 16 16"><path d="M4 4.500a6 6 0 1 1 -1.800 4.500" fill="none" stroke="#2f5f9f" stroke-width="2"/><path d="M1 1v6.500h6z" fill="#2f5f9f"/></svg>
<svg class="ic" style="left:1646px;top:268px" width="16" height="16" viewBox="0 0 16 16"><rect x="1.500" y="1.500" width="13" height="13" fill="#dfe9f7" stroke="#3b74c9"/><rect x="1.500" y="8.500" width="6" height="6" fill="#fff" stroke="#111" stroke-dasharray="1.500 1"/></svg>
<svg class="ic" style="left:1646px;top:290px" width="16" height="16" viewBox="0 0 16 16"><path d="M5.500 1.500h3l6 13h-9z" fill="#dfe9f7" stroke="#1d3f85" stroke-width="1.200"/><path d="M1.500 1.500h4v13h-4z" fill="#fff" stroke="#111" stroke-width="1.200"/></svg>
<svg class="ic" style="left:1646px;top:312px" width="16" height="16" viewBox="0 0 16 16"><path d="M1 10l6-1.500" stroke="#3b74c9" stroke-width="1.300"/><path d="M9 8l6-1.500" stroke="#3b74c9" stroke-width="1.300" stroke-dasharray="1.500 1.500"/><path d="M5 15l6-14" stroke="#1d3f85" stroke-width="1.300"/></svg>
<svg class="ic" style="left:1646px;top:334px" width="16" height="16" viewBox="0 0 16 16"><path d="M1 10l7-1.500" stroke="#3b74c9" stroke-width="1.300" stroke-dasharray="1.500 1.500"/><path d="M8 8.500l3-.8" stroke="#3b74c9" stroke-width="1.300"/><path d="M9 15l6-14" stroke="#1d3f85" stroke-width="1.300"/></svg>
<svg class="ic" style="left:1646px;top:356px" width="16" height="16" viewBox="0 0 16 16"><rect x="1.500" y="3.500" width="13" height="10" fill="#eef2f8" stroke="#111" stroke-width="1.300"/><rect x="6.500" y="2" width="3" height="3" fill="#1f7fe6"/></svg>
<svg class="ic" style="left:1646px;top:378px" width="16" height="16" viewBox="0 0 16 16"><path d="M5.500 3.500h-4v10h13v-10h-4" fill="#eef2f8" stroke="#111" stroke-width="1.300"/><rect x="4.0" y="2.0" width="3" height="3" fill="#1f7fe6"/><rect x="9.0" y="2.0" width="3" height="3" fill="#1f7fe6"/></svg>
<svg class="ic" style="left:1646px;top:400px" width="16" height="16" viewBox="0 0 16 16"><path d="M1 8h5M10 8h5" stroke="#111" stroke-width="1.300"/><path d="M8 8l-4-3v6zM8 8l4-3v6z" fill="#111"/></svg>
<svg class="ic" style="left:1646px;top:422px" width="16" height="16" viewBox="0 0 16 16"><path d="M2 15v-8l6-5h7" fill="none" stroke="#111" stroke-width="1.300"/><path d="M2 7v-5h6" fill="none" stroke="#3b74c9" stroke-dasharray="1.500 1.500"/></svg>
<svg class="ic" style="left:1646px;top:443px" width="16" height="16" viewBox="0 0 16 16"><path d="M2 15v-6c0-5 3-7 8-7h5" fill="none" stroke="#111" stroke-width="1.300"/><path d="M2 8v-6h7" fill="none" stroke="#3b74c9" stroke-dasharray="1.500 1.500"/></svg>
<svg class="ic" style="left:1646px;top:466px" width="16" height="16" viewBox="0 0 16 16"><path d="M8 8l-6-6M8 8l6-5M8 8l-7 2M8 8l6 6M8 8l-3 7M8 8l7 0" stroke="#e8b820" stroke-width="1.400"/><path d="M5 5l6 0 0 6-6 0z" fill="#e0483a" stroke="#9a2010"/><path d="M14 2l-8 10" stroke="#c98a4a" stroke-width="1.600"/><circle cx="3" cy="4" r="1.200" fill="#e0483a"/><circle cx="13" cy="13" r="1.200" fill="#e0483a"/><circle cx="4" cy="13" r="1" fill="#e8b820"/></svg>
<svg class="ic" style="left:1646px;top:506px" width="16" height="16" viewBox="0 0 16 16"><rect x="1.500" y="1.500" width="9" height="9" fill="#c3d6ee" stroke="#3f6fb0"/><rect x="5.500" y="5.500" width="9" height="9" fill="#5d8acb" stroke="#3f6fb0"/><rect x="10" y="10" width="4" height="4" fill="#c3d6ee" opacity=".6"/></svg>
<svg class="ic" style="left:1646px;top:528px" width="16" height="16" viewBox="0 0 16 16"><rect x="1.500" y="1.500" width="8" height="8" fill="#c3d6ee" stroke="#3f6fb0"/><rect x="4.500" y="4.500" width="8" height="8" fill="#5d8acb" stroke="#3f6fb0"/><rect x="8.500" y="8.500" width="6" height="6" fill="#c3d6ee" stroke="#3f6fb0"/></svg>
<svg class="ic" style="left:1646px;top:550px" width="16" height="16" viewBox="0 0 16 16"><rect x="4.500" y="5.500" width="10" height="9" fill="#c3d6ee" stroke="#3f6fb0"/><rect x="1.500" y="1.500" width="11" height="10" fill="#5d8acb" stroke="#3f6fb0"/></svg>
<svg class="ic" style="left:1646px;top:572px" width="16" height="16" viewBox="0 0 16 16"><rect x="1.500" y="1.500" width="11" height="10" fill="#5d8acb" stroke="#3f6fb0"/><rect x="4.500" y="5.500" width="10" height="9" fill="#c3d6ee" stroke="#3f6fb0"/></svg>
<div class="a" style="left:279px;top:902px;width:1388px;height:20px;background:#eae9ef"></div>
<div class="a" style="left:307px;top:902px;width:72px;height:14px;background:#eae9ef;border:1px solid #c4c3cd;border-top:none;box-sizing:border-box"></div>
<svg class="ic" style="left:310px;top:903px" width="13" height="12"><path d="M3 2v8M10 2l-5 4 5 4z" fill="#000" stroke="#000" stroke-width="1.200"/></svg>
<svg class="ic" style="left:327px;top:903px" width="13" height="12"><path d="M9 2l-5 4 5 4z" fill="#000" stroke="#000" stroke-width="1.200"/></svg>
<svg class="ic" style="left:345px;top:903px" width="13" height="12"><path d="M4 2l5 4-5 4z" fill="#000" stroke="#000" stroke-width="1.200"/></svg>
<svg class="ic" style="left:363px;top:903px" width="13" height="12"><path d="M3 2l5 4-5 4zM10 2v8" fill="#000" stroke="#000" stroke-width="1.200"/></svg>
<div class="a" style="left:324px;top:903px;width:1px;height:12px;background:#b9b8c4"></div>
<div class="a" style="left:342px;top:903px;width:1px;height:12px;background:#b9b8c4"></div>
<div class="a" style="left:360px;top:903px;width:1px;height:12px;background:#b9b8c4"></div>
<svg class="ic" style="left:378px;top:902px" width="100" height="15" viewBox="0 0 100 15"><path d="M0 0h45l-5 14h-32z" fill="#000"/><path d="M2.500 0l6 13.500M41.500 0.500l-5 13" fill="none" stroke="#fff" stroke-width="1.300"/><path d="M45 0l-5 13.500h45l5-13.500z" fill="#eeeef1" stroke="#000" stroke-width="1.100"/></svg>
<div class="t" style="left:391px;top:901px;width:26px;color:#fff">모형</div>
<div class="t" style="left:426px;top:901px;width:34px">A3-01</div>
<div class="a" style="left:279px;top:922px;width:1388px;height:2px;background:#6a6973"></div><div class="a" style="left:279px;top:918px;width:1388px;height:1px;background:#fbfbfd"></div>
<div class="a" style="left:279px;top:923px;width:1388px;height:69px;background:#eae9ef"></div>
<div class="a" style="left:285px;top:932px;width:3px;height:58px;border-left:1px solid #fff;border-right:1px solid #a9a8b3;box-sizing:border-box"></div>
<div class="a" style="left:288px;top:932px;width:3px;height:58px;border-left:1px solid #fff;border-right:1px solid #a9a8b3;box-sizing:border-box"></div>
<div class="a" style="left:296px;top:933px;width:1364px;height:39px;box-sizing:border-box;background:#fff;border:2px solid;border-color:#6f6e78 #e4e3ea #e4e3ea #6f6e78"></div>
<div class="a" style="left:296px;top:972px;width:1348px;height:19px;box-sizing:border-box;background:#fff;border:2px solid;border-color:#6f6e78 #e4e3ea #e4e3ea #6f6e78"></div>
<div class="a cm" style="left:298px;top:935px;width:40px">명령:</div>
<div class="a cm" style="left:346px;top:935px;width:72px">e ERASE 1</div>
<div class="a cm" style="left:418px;top:935px;width:34px">개를</div>
<div class="a cm" style="left:458px;top:935px;width:34px">찾음</div>
<div class="a cm" style="left:298px;top:952px;width:40px">명령:</div>
<div class="a cm" style="left:346px;top:952px;width:100px">'_.zoom _e</div>
<div class="a cm" style="left:298px;top:974px;width:40px">명령:</div>
<div class="a" style="left:1644px;top:933px;width:16px;height:38px;background:#f4f4fb"></div>
<div class="a" style="left:1645px;top:934px;width:14px;height:15px;box-sizing:border-box;border:1px solid #b4c4e4;border-radius:2px;background:linear-gradient(#e4ecfc,#c6d4f4)"><svg width="14" height="13" style="position:absolute;left:-1px;top:0"><path d="M3.500 7l3.500-3.500 3.500 3.500" fill="none" stroke="#4d6185" stroke-width="2"/></svg></div>
<div class="a" style="left:1645px;top:956px;width:14px;height:15px;box-sizing:border-box;border:1px solid #b4c4e4;border-radius:2px;background:linear-gradient(#e4ecfc,#c6d4f4)"><svg width="14" height="13" style="position:absolute;left:-1px;top:0"><path d="M3.500 4.500l3.500 3.500 3.500-3.500" fill="none" stroke="#4d6185" stroke-width="2"/></svg></div>
<div class="a" style="left:1590px;top:974px;width:54px;height:15px;background:#f4f4fb"></div>
<div class="a" style="left:1630px;top:974px;width:13px;height:15px;box-sizing:border-box;border:1px solid #b4c4e4;border-radius:2px;background:linear-gradient(#e4ecfc,#c6d4f4)"><svg width="12" height="13" style="position:absolute;left:0;top:0"><path d="M4 3l3.500 3.500-3.500 3.500" fill="none" stroke="#4d6185" stroke-width="2"/></svg></div>
<div class="a" style="left:0;top:991px;width:1667px;height:23px;background:#eae9ef;border-top:1px solid #fbfbfd;box-sizing:border-box"></div>
<div class="a" style="left:0;top:990px;width:1667px;height:1px;background:#c4c3cd"></div>
<div class="sb on" style="left:4px;width:149px;text-align:left;padding-left:2px;border-color:#9d9ca8 #fff #fff #9d9ca8;background:#eae9ef">27817.56, 70186.43, 0.00</div>
<div class="sb off" style="left:157px;width:30px">스냅</div>
<div class="sb off" style="left:190px;width:27px">모눈</div>
<div class="sb on" style="left:220px;width:30px">직교</div>
<div class="sb off" style="left:253px;width:41px">극좌표</div>
<div class="sb on" style="left:297px;width:47px">OSNAP</div>
<div class="sb on" style="left:347px;width:55px">OTRACK</div>
<div class="sb on" style="left:405px;width:38px">DUCS</div>
<div class="sb off" style="left:446px;width:29px">DYN</div>
<div class="sb off" style="left:478px;width:30px">LWT</div>
<div class="sb on" style="left:511px;width:30px">모형</div>
<div class="a" style="left:1532px;top:997px;width:83px;height:18px;border-left:1px solid #b9b8c4;border-top:1px solid #d9d8e0;background:#efeef3;box-sizing:border-box"></div>
<svg class="ic" style="left:1535px;top:997px" width="17" height="16" viewBox="0 0 17 16"><path d="M2 2l9 9M11 2l-8 10" stroke="#8fa6cc" stroke-width="1.600"/><path d="M10 5l6 10h-12z" fill="#f7dc2e" stroke="#9a8200" stroke-width=".8"/><path d="M10 8v4M10 13v1.200" stroke="#000" stroke-width="1.500"/></svg>
<svg class="ic" style="left:1555px;top:996px" width="17" height="17" viewBox="0 0 17 17"><path d="M8 8v-4c0-4 6-4 6 0v2" fill="none" stroke="#d9a800" stroke-width="1.800"/><rect x="1" y="7" width="11" height="9" rx="1" fill="#ecd02c" stroke="#7a6600"/><path d="M2 10h9M2 13h9" stroke="#7a6600" stroke-width="1"/></svg>
<svg class="ic" style="left:1574px;top:996px" width="18" height="17" viewBox="0 0 18 17"><path d="M1 2h9l3 3v10h-12z" fill="#3b6eb8" stroke="#1d3f85"/><path d="M5 3v11M2 6h6" stroke="#fff" stroke-width="1.200"/><circle cx="12.500" cy="12" r="4.200" fill="#2db84a" stroke="#fff" stroke-width=".8"/><path d="M10.500 12l1.500 1.700 3-3.200" fill="none" stroke="#fff" stroke-width="1.500"/></svg>
<svg class="ic" style="left:1594px;top:996px" width="18" height="18" viewBox="0 0 18 18"><path d="M3 6l6-3 8 8-6 5z" fill="#d5e6f4" stroke="#6e98c4"/><path d="M1 2l3-1 4 5-2 2z" fill="#222"/><path d="M5 9l8 5" stroke="#6e98c4"/></svg>
<div class="a" style="left:1620px;top:1008px;width:0;height:0;border:4px solid transparent;border-top:4px solid #000;border-bottom:none"></div>
<div class="a" style="left:1637px;top:997px;width:16px;height:16px;box-sizing:border-box;border:2px solid #1d3f85;background:linear-gradient(135deg,#e8f0fa,#a8c4e4)"></div>
<svg class="ic" style="left:1655px;top:1003px" width="11" height="11"><path d="M9 1v2M9 5v2M5 5v2M9 9v1M5 9v1M1 9v1" stroke="#c4c3cd" stroke-width="2"/></svg>
<svg class="ic" style="left:1270px;top:910px" width="360" height="101" viewBox="0 0 360 101"><path d="M16.500 2.500h327a14 14 0 0 1 14 14v46a14 14 0 0 1 -14 14h-71v18.500l-18-18.500h-238a14 14 0 0 1 -14-14v-46a14 14 0 0 1 14-14z" fill="#ffffe1" stroke="#000" stroke-width="1.200"/></svg>
<svg class="ic" style="left:1280px;top:920px" width="18" height="19" viewBox="0 0 18 19"><path d="M9 1a7.500 7.500 0 1 1 -3 14.300l-3 3.200 .8-4.500a7.500 7.500 0 0 1 5.200-13z" fill="#e8eefc" stroke="#9aa8c8"/><circle cx="9" cy="8.500" r="6" fill="url(#gHelp)"/><path d="M9 7.500v4.500" stroke="#fff" stroke-width="2"/><circle cx="9" cy="5" r="1.200" fill="#fff"/></svg>
<div class="t" style="left:1307px;top:920px;width:112px;font-weight:bold;font-size:12.500px;letter-spacing:.3px">커뮤니케이션 센터</div>
<div class="t" style="left:1287px;top:942px;width:330px">사용자의 소프트웨어를 가장 최신으로 유지하는 손쉬운 방법.</div>
<div class="t" style="left:1287px;top:960px;width:110px;color:#0000ee;text-decoration:underline">여기를 누르십시오.</div>
<div class="a" style="left:1603px;top:922px;width:16px;height:15px;box-sizing:border-box;border:1px solid #b9b8c4;background:#eeedf2"><svg width="14" height="13" style="position:absolute;left:0;top:0"><path d="M3.500 3l7 7M10.500 3l-7 7" stroke="#000" stroke-width="2"/></svg></div>
</body></html>
